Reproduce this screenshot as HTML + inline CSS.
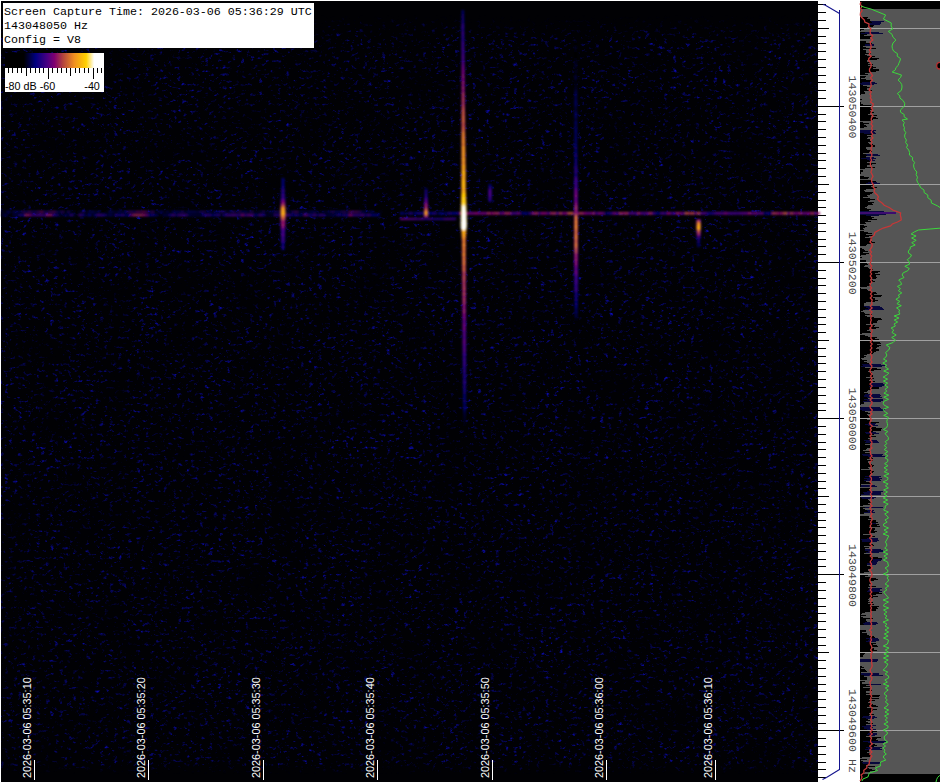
<!DOCTYPE html>
<html><head><meta charset="utf-8"><title>Spectrogram</title><style>
html,body{margin:0;padding:0;background:#fff;}
body{width:941px;height:783px;overflow:hidden;position:relative;}
svg{position:absolute;left:0;top:0;}
</style></head><body>
<svg width="941" height="783" viewBox="0 0 941 783">
<defs>
<filter id="nz" x="1" y="1" width="817" height="781" filterUnits="userSpaceOnUse" color-interpolation-filters="sRGB">
<feTurbulence type="fractalNoise" baseFrequency="0.22 0.30" numOctaves="3" seed="5" result="hi"/>
<feColorMatrix in="hi" type="matrix" values="0 0 0 0 0.05  0 0 0 0 0.05  0 0 0 0 0.8  3 0 0 0 -1.79" result="dots"/>
<feTurbulence type="fractalNoise" baseFrequency="0.03" numOctaves="2" seed="9" result="lo"/>
<feColorMatrix in="lo" type="matrix" values="0 0 0 0 0  0 0 0 0 0  0 0 0 0 0  1.6 0 0 0 -0.1" result="env"/>
<feComposite in="dots" in2="env" operator="in" result="m"/>
<feGaussianBlur in="m" stdDeviation="0.75"/>
</filter>
<linearGradient id="nzfade" x1="0" y1="0" x2="0" y2="1">
<stop offset="0" stop-color="#fff" stop-opacity="0"/>
<stop offset="0.018" stop-color="#fff" stop-opacity="0"/>
<stop offset="0.05" stop-color="#fff" stop-opacity="1"/>
<stop offset="0.975" stop-color="#fff" stop-opacity="1"/>
<stop offset="0.99" stop-color="#fff" stop-opacity="0"/>
</linearGradient>
<mask id="nzm" maskUnits="userSpaceOnUse" x="1" y="1" width="817" height="781"><rect x="1" y="1" width="817" height="781" fill="url(#nzfade)"/></mask>
<filter id="bl" x="-50%" y="-50%" width="200%" height="200%"><feGaussianBlur stdDeviation="0.9"/></filter>
<filter id="bl2" x="-5%" y="-500%" width="110%" height="1100%"><feGaussianBlur stdDeviation="0.8"/></filter>
<linearGradient id="cbar" x1="5" y1="0" x2="104" y2="0" gradientUnits="userSpaceOnUse">
<stop offset="0.000" stop-color="#000000"/><stop offset="0.190" stop-color="#000000"/><stop offset="0.310" stop-color="#000080"/><stop offset="0.430" stop-color="#4b0082"/><stop offset="0.500" stop-color="#800070"/><stop offset="0.580" stop-color="#b04040"/><stop offset="0.700" stop-color="#f09020"/><stop offset="0.820" stop-color="#ffd000"/><stop offset="0.900" stop-color="#ffffff"/><stop offset="1.000" stop-color="#ffffff"/></linearGradient>
</defs>
<rect x="1" y="1" width="817" height="781" fill="#010104"/><g mask="url(#nzm)"><rect x="1" y="1" width="817" height="781" fill="#fff" filter="url(#nz)"/></g><g filter="url(#bl2)"><rect x="1" y="211.0" width="3" height="1.4" fill="#00003b"/><rect x="4" y="211.0" width="3" height="1.4" fill="#000016"/><rect x="7" y="211.0" width="3" height="1.4" fill="#010080"/><rect x="10" y="211.0" width="3" height="1.4" fill="#00000b"/><rect x="13" y="211.0" width="3" height="1.4" fill="#00007a"/><rect x="16" y="211.0" width="3" height="1.4" fill="#00006c"/><rect x="19" y="211.0" width="3" height="1.4" fill="#00004e"/><rect x="22" y="211.0" width="3" height="1.4" fill="#340081"/><rect x="25" y="211.0" width="3" height="1.4" fill="#100080"/><rect x="28" y="211.0" width="3" height="1.4" fill="#4e0081"/><rect x="31" y="211.0" width="3" height="1.4" fill="#1f0081"/><rect x="34" y="211.0" width="3" height="1.4" fill="#1a0081"/><rect x="37" y="211.0" width="3" height="1.4" fill="#3e0082"/><rect x="40" y="211.0" width="3" height="1.4" fill="#7a0072"/><rect x="43" y="211.0" width="3" height="1.4" fill="#1d0081"/><rect x="46" y="211.0" width="3" height="1.4" fill="#250081"/><rect x="49" y="211.0" width="3" height="1.4" fill="#490082"/><rect x="52" y="211.0" width="3" height="1.4" fill="#5f007b"/><rect x="55" y="211.0" width="3" height="1.4" fill="#170081"/><rect x="58" y="211.0" width="3" height="1.4" fill="#000066"/><rect x="61" y="211.0" width="3" height="1.4" fill="#300081"/><rect x="64" y="211.0" width="3" height="1.4" fill="#000003"/><rect x="67" y="211.0" width="3" height="1.4" fill="#1b0081"/><rect x="70" y="211.0" width="3" height="1.4" fill="#000033"/><rect x="73" y="211.0" width="3" height="1.4" fill="#000014"/><rect x="76" y="211.0" width="3" height="1.4" fill="#00000e"/><rect x="79" y="211.0" width="3" height="1.4" fill="#000037"/><rect x="82" y="211.0" width="3" height="1.4" fill="#150081"/><rect x="85" y="211.0" width="3" height="1.4" fill="#00001c"/><rect x="88" y="211.0" width="3" height="1.4" fill="#000071"/><rect x="91" y="211.0" width="3" height="1.4" fill="#00007e"/><rect x="94" y="211.0" width="3" height="1.4" fill="#000045"/><rect x="97" y="211.0" width="3" height="1.4" fill="#00006a"/><rect x="100" y="211.0" width="3" height="1.4" fill="#000003"/><rect x="103" y="211.0" width="3" height="1.4" fill="#000002"/><rect x="106" y="211.0" width="3" height="1.4" fill="#000021"/><rect x="109" y="211.0" width="3" height="1.4" fill="#040080"/><rect x="112" y="211.0" width="3" height="1.4" fill="#000051"/><rect x="115" y="211.0" width="3" height="1.4" fill="#000039"/><rect x="118" y="211.0" width="3" height="1.4" fill="#000076"/><rect x="121" y="211.0" width="3" height="1.4" fill="#000061"/><rect x="124" y="211.0" width="3" height="1.4" fill="#000050"/><rect x="127" y="211.0" width="3" height="1.4" fill="#340081"/><rect x="130" y="211.0" width="3" height="1.4" fill="#410082"/><rect x="133" y="211.0" width="3" height="1.4" fill="#250081"/><rect x="136" y="211.0" width="3" height="1.4" fill="#680078"/><rect x="139" y="211.0" width="3" height="1.4" fill="#640079"/><rect x="142" y="211.0" width="3" height="1.4" fill="#85076b"/><rect x="145" y="211.0" width="3" height="1.4" fill="#500080"/><rect x="148" y="211.0" width="3" height="1.4" fill="#000079"/><rect x="151" y="211.0" width="3" height="1.4" fill="#3e0082"/><rect x="154" y="211.0" width="3" height="1.4" fill="#00001d"/><rect x="157" y="211.0" width="3" height="1.4" fill="#000054"/><rect x="160" y="211.0" width="3" height="1.4" fill="#0e0080"/><rect x="163" y="211.0" width="3" height="1.4" fill="#000016"/><rect x="166" y="211.0" width="3" height="1.4" fill="#00005e"/><rect x="169" y="211.0" width="3" height="1.4" fill="#000000"/><rect x="172" y="211.0" width="3" height="1.4" fill="#020080"/><rect x="175" y="211.0" width="3" height="1.4" fill="#0e0080"/><rect x="178" y="211.0" width="3" height="1.4" fill="#000070"/><rect x="181" y="211.0" width="3" height="1.4" fill="#1c0081"/><rect x="184" y="211.0" width="3" height="1.4" fill="#000038"/><rect x="187" y="211.0" width="3" height="1.4" fill="#060080"/><rect x="190" y="211.0" width="3" height="1.4" fill="#000074"/><rect x="193" y="211.0" width="3" height="1.4" fill="#000071"/><rect x="196" y="211.0" width="3" height="1.4" fill="#000057"/><rect x="199" y="211.0" width="3" height="1.4" fill="#180081"/><rect x="202" y="211.0" width="3" height="1.4" fill="#250081"/><rect x="205" y="211.0" width="3" height="1.4" fill="#00005a"/><rect x="208" y="211.0" width="3" height="1.4" fill="#020080"/><rect x="211" y="211.0" width="3" height="1.4" fill="#000002"/><rect x="214" y="211.0" width="3" height="1.4" fill="#070080"/><rect x="217" y="211.0" width="3" height="1.4" fill="#000080"/><rect x="220" y="211.0" width="3" height="1.4" fill="#2c0081"/><rect x="223" y="211.0" width="3" height="1.4" fill="#1a0081"/><rect x="226" y="211.0" width="3" height="1.4" fill="#000044"/><rect x="229" y="211.0" width="3" height="1.4" fill="#00006e"/><rect x="232" y="211.0" width="3" height="1.4" fill="#2a0081"/><rect x="235" y="211.0" width="3" height="1.4" fill="#00005e"/><rect x="238" y="211.0" width="3" height="1.4" fill="#310081"/><rect x="241" y="211.0" width="3" height="1.4" fill="#0e0080"/><rect x="244" y="211.0" width="3" height="1.4" fill="#00007b"/><rect x="247" y="211.0" width="3" height="1.4" fill="#000050"/><rect x="250" y="211.0" width="3" height="1.4" fill="#2a0081"/><rect x="253" y="211.0" width="3" height="1.4" fill="#000029"/><rect x="256" y="211.0" width="3" height="1.4" fill="#000034"/><rect x="259" y="211.0" width="3" height="1.4" fill="#00004c"/><rect x="262" y="211.0" width="3" height="1.4" fill="#1c0081"/><rect x="265" y="211.0" width="3" height="1.4" fill="#000007"/><rect x="268" y="211.0" width="3" height="1.4" fill="#000055"/><rect x="271" y="211.0" width="3" height="1.4" fill="#00006b"/><rect x="274" y="211.0" width="3" height="1.4" fill="#1d0081"/><rect x="277" y="211.0" width="3" height="1.4" fill="#150081"/><rect x="280" y="211.0" width="3" height="1.4" fill="#1b0081"/><rect x="283" y="211.0" width="3" height="1.4" fill="#000034"/><rect x="286" y="211.0" width="3" height="1.4" fill="#000057"/><rect x="289" y="211.0" width="3" height="1.4" fill="#000055"/><rect x="292" y="211.0" width="3" height="1.4" fill="#310081"/><rect x="295" y="211.0" width="3" height="1.4" fill="#440082"/><rect x="298" y="211.0" width="3" height="1.4" fill="#000053"/><rect x="301" y="211.0" width="3" height="1.4" fill="#00005a"/><rect x="304" y="211.0" width="3" height="1.4" fill="#00005d"/><rect x="307" y="211.0" width="3" height="1.4" fill="#00004e"/><rect x="310" y="211.0" width="3" height="1.4" fill="#000074"/><rect x="313" y="211.0" width="3" height="1.4" fill="#00007f"/><rect x="316" y="211.0" width="3" height="1.4" fill="#000032"/><rect x="319" y="211.0" width="3" height="1.4" fill="#000000"/><rect x="322" y="211.0" width="3" height="1.4" fill="#00004f"/><rect x="325" y="211.0" width="3" height="1.4" fill="#000044"/><rect x="328" y="211.0" width="3" height="1.4" fill="#00006f"/><rect x="331" y="211.0" width="3" height="1.4" fill="#280081"/><rect x="334" y="211.0" width="3" height="1.4" fill="#0b0080"/><rect x="337" y="211.0" width="3" height="1.4" fill="#00007b"/><rect x="340" y="211.0" width="3" height="1.4" fill="#180081"/><rect x="343" y="211.0" width="3" height="1.4" fill="#310081"/><rect x="346" y="211.0" width="3" height="1.4" fill="#00006e"/><rect x="349" y="211.0" width="3" height="1.4" fill="#700075"/><rect x="352" y="211.0" width="3" height="1.4" fill="#5b007d"/><rect x="355" y="211.0" width="3" height="1.4" fill="#59007d"/><rect x="358" y="211.0" width="3" height="1.4" fill="#3a0082"/><rect x="361" y="211.0" width="3" height="1.4" fill="#00006f"/><rect x="364" y="211.0" width="3" height="1.4" fill="#00005c"/><rect x="367" y="211.0" width="3" height="1.4" fill="#000013"/><rect x="370" y="211.0" width="3" height="1.4" fill="#00007f"/><rect x="373" y="211.0" width="3" height="1.4" fill="#000003"/><rect x="376" y="211.0" width="3" height="1.4" fill="#000004"/><rect x="379" y="211.0" width="3" height="1.4" fill="#000022"/><rect x="1" y="214.0" width="3" height="2.2" fill="#00002d"/><rect x="4" y="214.0" width="3" height="2.2" fill="#000054"/><rect x="7" y="214.0" width="3" height="2.2" fill="#000018"/><rect x="10" y="214.0" width="3" height="2.2" fill="#000011"/><rect x="13" y="214.0" width="3" height="2.2" fill="#00003d"/><rect x="16" y="214.0" width="3" height="2.2" fill="#000049"/><rect x="19" y="214.0" width="3" height="2.2" fill="#150081"/><rect x="22" y="214.0" width="3" height="2.2" fill="#050080"/><rect x="25" y="214.0" width="3" height="2.2" fill="#8e1362"/><rect x="28" y="214.0" width="3" height="2.2" fill="#790072"/><rect x="31" y="214.0" width="3" height="2.2" fill="#360081"/><rect x="34" y="214.0" width="3" height="2.2" fill="#3b0082"/><rect x="37" y="214.0" width="3" height="2.2" fill="#410082"/><rect x="40" y="214.0" width="3" height="2.2" fill="#450082"/><rect x="43" y="214.0" width="3" height="2.2" fill="#290081"/><rect x="46" y="214.0" width="3" height="2.2" fill="#890c67"/><rect x="49" y="214.0" width="3" height="2.2" fill="#8c1064"/><rect x="52" y="214.0" width="3" height="2.2" fill="#2b0081"/><rect x="55" y="214.0" width="3" height="2.2" fill="#180081"/><rect x="58" y="214.0" width="3" height="2.2" fill="#000039"/><rect x="61" y="214.0" width="3" height="2.2" fill="#00002c"/><rect x="64" y="214.0" width="3" height="2.2" fill="#000058"/><rect x="67" y="214.0" width="3" height="2.2" fill="#000044"/><rect x="70" y="214.0" width="3" height="2.2" fill="#230081"/><rect x="73" y="214.0" width="3" height="2.2" fill="#00002d"/><rect x="76" y="214.0" width="3" height="2.2" fill="#000010"/><rect x="79" y="214.0" width="3" height="2.2" fill="#320081"/><rect x="82" y="214.0" width="3" height="2.2" fill="#00007b"/><rect x="85" y="214.0" width="3" height="2.2" fill="#00002a"/><rect x="88" y="214.0" width="3" height="2.2" fill="#00007f"/><rect x="91" y="214.0" width="3" height="2.2" fill="#000010"/><rect x="94" y="214.0" width="3" height="2.2" fill="#00007b"/><rect x="97" y="214.0" width="3" height="2.2" fill="#360081"/><rect x="100" y="214.0" width="3" height="2.2" fill="#270081"/><rect x="103" y="214.0" width="3" height="2.2" fill="#120080"/><rect x="106" y="214.0" width="3" height="2.2" fill="#000042"/><rect x="109" y="214.0" width="3" height="2.2" fill="#000059"/><rect x="112" y="214.0" width="3" height="2.2" fill="#00002f"/><rect x="115" y="214.0" width="3" height="2.2" fill="#1c0081"/><rect x="118" y="214.0" width="3" height="2.2" fill="#000080"/><rect x="121" y="214.0" width="3" height="2.2" fill="#230081"/><rect x="124" y="214.0" width="3" height="2.2" fill="#00006c"/><rect x="127" y="214.0" width="3" height="2.2" fill="#000074"/><rect x="130" y="214.0" width="3" height="2.2" fill="#60007b"/><rect x="133" y="214.0" width="3" height="2.2" fill="#961e5a"/><rect x="136" y="214.0" width="3" height="2.2" fill="#9a2356"/><rect x="139" y="214.0" width="3" height="2.2" fill="#982058"/><rect x="142" y="214.0" width="3" height="2.2" fill="#8a0e66"/><rect x="145" y="214.0" width="3" height="2.2" fill="#60007b"/><rect x="148" y="214.0" width="3" height="2.2" fill="#010080"/><rect x="151" y="214.0" width="3" height="2.2" fill="#110080"/><rect x="154" y="214.0" width="3" height="2.2" fill="#000065"/><rect x="157" y="214.0" width="3" height="2.2" fill="#000016"/><rect x="160" y="214.0" width="3" height="2.2" fill="#000012"/><rect x="163" y="214.0" width="3" height="2.2" fill="#000047"/><rect x="166" y="214.0" width="3" height="2.2" fill="#000042"/><rect x="169" y="214.0" width="3" height="2.2" fill="#120080"/><rect x="172" y="214.0" width="3" height="2.2" fill="#330081"/><rect x="175" y="214.0" width="3" height="2.2" fill="#00006a"/><rect x="178" y="214.0" width="3" height="2.2" fill="#300081"/><rect x="181" y="214.0" width="3" height="2.2" fill="#370081"/><rect x="184" y="214.0" width="3" height="2.2" fill="#330081"/><rect x="187" y="214.0" width="3" height="2.2" fill="#000058"/><rect x="190" y="214.0" width="3" height="2.2" fill="#00003a"/><rect x="193" y="214.0" width="3" height="2.2" fill="#00003b"/><rect x="196" y="214.0" width="3" height="2.2" fill="#000035"/><rect x="199" y="214.0" width="3" height="2.2" fill="#000036"/><rect x="202" y="214.0" width="3" height="2.2" fill="#090080"/><rect x="205" y="214.0" width="3" height="2.2" fill="#2c0081"/><rect x="208" y="214.0" width="3" height="2.2" fill="#240081"/><rect x="211" y="214.0" width="3" height="2.2" fill="#000071"/><rect x="214" y="214.0" width="3" height="2.2" fill="#0d0080"/><rect x="217" y="214.0" width="3" height="2.2" fill="#200081"/><rect x="220" y="214.0" width="3" height="2.2" fill="#00001f"/><rect x="223" y="214.0" width="3" height="2.2" fill="#120080"/><rect x="226" y="214.0" width="3" height="2.2" fill="#380081"/><rect x="229" y="214.0" width="3" height="2.2" fill="#330081"/><rect x="232" y="214.0" width="3" height="2.2" fill="#410082"/><rect x="235" y="214.0" width="3" height="2.2" fill="#310081"/><rect x="238" y="214.0" width="3" height="2.2" fill="#1a0081"/><rect x="241" y="214.0" width="3" height="2.2" fill="#6e0076"/><rect x="244" y="214.0" width="3" height="2.2" fill="#250081"/><rect x="247" y="214.0" width="3" height="2.2" fill="#4e0081"/><rect x="250" y="214.0" width="3" height="2.2" fill="#510080"/><rect x="253" y="214.0" width="3" height="2.2" fill="#000077"/><rect x="256" y="214.0" width="3" height="2.2" fill="#00006a"/><rect x="259" y="214.0" width="3" height="2.2" fill="#340081"/><rect x="262" y="214.0" width="3" height="2.2" fill="#160081"/><rect x="265" y="214.0" width="3" height="2.2" fill="#00002f"/><rect x="268" y="214.0" width="3" height="2.2" fill="#000026"/><rect x="271" y="214.0" width="3" height="2.2" fill="#00002b"/><rect x="274" y="214.0" width="3" height="2.2" fill="#2c0081"/><rect x="277" y="214.0" width="3" height="2.2" fill="#200081"/><rect x="280" y="214.0" width="3" height="2.2" fill="#00002b"/><rect x="283" y="214.0" width="3" height="2.2" fill="#250081"/><rect x="286" y="214.0" width="3" height="2.2" fill="#3b0082"/><rect x="289" y="214.0" width="3" height="2.2" fill="#190081"/><rect x="292" y="214.0" width="3" height="2.2" fill="#000077"/><rect x="295" y="214.0" width="3" height="2.2" fill="#1d0081"/><rect x="298" y="214.0" width="3" height="2.2" fill="#000064"/><rect x="301" y="214.0" width="3" height="2.2" fill="#00004d"/><rect x="304" y="214.0" width="3" height="2.2" fill="#57007e"/><rect x="307" y="214.0" width="3" height="2.2" fill="#230081"/><rect x="310" y="214.0" width="3" height="2.2" fill="#0b0080"/><rect x="313" y="214.0" width="3" height="2.2" fill="#370081"/><rect x="316" y="214.0" width="3" height="2.2" fill="#00006c"/><rect x="319" y="214.0" width="3" height="2.2" fill="#290081"/><rect x="322" y="214.0" width="3" height="2.2" fill="#230081"/><rect x="325" y="214.0" width="3" height="2.2" fill="#000038"/><rect x="328" y="214.0" width="3" height="2.2" fill="#000041"/><rect x="331" y="214.0" width="3" height="2.2" fill="#00004d"/><rect x="334" y="214.0" width="3" height="2.2" fill="#000048"/><rect x="337" y="214.0" width="3" height="2.2" fill="#120080"/><rect x="340" y="214.0" width="3" height="2.2" fill="#000071"/><rect x="343" y="214.0" width="3" height="2.2" fill="#1e0081"/><rect x="346" y="214.0" width="3" height="2.2" fill="#0c0080"/><rect x="349" y="214.0" width="3" height="2.2" fill="#800170"/><rect x="352" y="214.0" width="3" height="2.2" fill="#300081"/><rect x="355" y="214.0" width="3" height="2.2" fill="#2f0081"/><rect x="358" y="214.0" width="3" height="2.2" fill="#2c0081"/><rect x="361" y="214.0" width="3" height="2.2" fill="#430082"/><rect x="364" y="214.0" width="3" height="2.2" fill="#000076"/><rect x="367" y="214.0" width="3" height="2.2" fill="#320081"/><rect x="370" y="214.0" width="3" height="2.2" fill="#000078"/><rect x="373" y="214.0" width="3" height="2.2" fill="#00007d"/><rect x="376" y="214.0" width="3" height="2.2" fill="#00007a"/><rect x="379" y="214.0" width="3" height="2.2" fill="#00000f"/><rect x="400" y="212.0" width="3" height="2.6" fill="#000076"/><rect x="403" y="212.0" width="3" height="2.6" fill="#00004a"/><rect x="406" y="212.0" width="3" height="2.6" fill="#00002b"/><rect x="409" y="212.0" width="3" height="2.6" fill="#1e0081"/><rect x="412" y="212.0" width="3" height="2.6" fill="#000048"/><rect x="415" y="212.0" width="3" height="2.6" fill="#00007b"/><rect x="418" y="212.0" width="3" height="2.6" fill="#170081"/><rect x="421" y="212.0" width="3" height="2.6" fill="#060080"/><rect x="424" y="212.0" width="3" height="2.6" fill="#000062"/><rect x="427" y="212.0" width="3" height="2.6" fill="#020080"/><rect x="430" y="212.0" width="3" height="2.6" fill="#060080"/><rect x="433" y="212.0" width="3" height="2.6" fill="#1c0081"/><rect x="436" y="212.0" width="3" height="2.6" fill="#00003d"/><rect x="439" y="212.0" width="3" height="2.6" fill="#060080"/><rect x="442" y="212.0" width="3" height="2.6" fill="#000055"/><rect x="445" y="212.0" width="3" height="2.6" fill="#00005a"/><rect x="448" y="212.0" width="3" height="2.6" fill="#1b0081"/><rect x="451" y="212.0" width="3" height="2.6" fill="#010080"/><rect x="454" y="212.0" width="3" height="2.6" fill="#060080"/><rect x="457" y="212.0" width="3" height="2.6" fill="#1a0081"/><rect x="460" y="212.0" width="3" height="2.6" fill="#961d5a"/><rect x="463" y="212.0" width="3" height="2.6" fill="#62007a"/><rect x="466" y="212.0" width="3" height="2.6" fill="#770073"/><rect x="469" y="212.0" width="3" height="2.6" fill="#6a0077"/><rect x="472" y="212.0" width="3" height="2.6" fill="#6b0077"/><rect x="475" y="212.0" width="3" height="2.6" fill="#81016f"/><rect x="478" y="212.0" width="3" height="2.6" fill="#64007a"/><rect x="481" y="212.0" width="3" height="2.6" fill="#6d0076"/><rect x="484" y="212.0" width="3" height="2.6" fill="#670079"/><rect x="487" y="212.0" width="3" height="2.6" fill="#982158"/><rect x="490" y="212.0" width="3" height="2.6" fill="#81016f"/><rect x="493" y="212.0" width="3" height="2.6" fill="#92185e"/><rect x="496" y="212.0" width="3" height="2.6" fill="#982158"/><rect x="499" y="212.0" width="3" height="2.6" fill="#4c0082"/><rect x="502" y="212.0" width="3" height="2.6" fill="#700075"/><rect x="505" y="212.0" width="3" height="2.6" fill="#992157"/><rect x="508" y="212.0" width="3" height="2.6" fill="#8f1461"/><rect x="511" y="212.0" width="3" height="2.6" fill="#400082"/><rect x="514" y="212.0" width="3" height="2.6" fill="#3e0082"/><rect x="517" y="212.0" width="3" height="2.6" fill="#62007a"/><rect x="520" y="212.0" width="3" height="2.6" fill="#000062"/><rect x="523" y="212.0" width="3" height="2.6" fill="#00007e"/><rect x="526" y="212.0" width="3" height="2.6" fill="#000062"/><rect x="529" y="212.0" width="3" height="2.6" fill="#2a0081"/><rect x="532" y="212.0" width="3" height="2.6" fill="#890c67"/><rect x="535" y="212.0" width="3" height="2.6" fill="#941b5c"/><rect x="538" y="212.0" width="3" height="2.6" fill="#410082"/><rect x="541" y="212.0" width="3" height="2.6" fill="#83046d"/><rect x="544" y="212.0" width="3" height="2.6" fill="#7d0071"/><rect x="547" y="212.0" width="3" height="2.6" fill="#400082"/><rect x="550" y="212.0" width="3" height="2.6" fill="#931a5d"/><rect x="553" y="212.0" width="3" height="2.6" fill="#9c2554"/><rect x="556" y="212.0" width="3" height="2.6" fill="#4b0082"/><rect x="559" y="212.0" width="3" height="2.6" fill="#a02b50"/><rect x="562" y="212.0" width="3" height="2.6" fill="#6c0077"/><rect x="565" y="212.0" width="3" height="2.6" fill="#81026f"/><rect x="568" y="212.0" width="3" height="2.6" fill="#ba4d3b"/><rect x="571" y="212.0" width="3" height="2.6" fill="#b6473d"/><rect x="574" y="212.0" width="3" height="2.6" fill="#7b0072"/><rect x="577" y="212.0" width="3" height="2.6" fill="#971f59"/><rect x="580" y="212.0" width="3" height="2.6" fill="#9a2356"/><rect x="583" y="212.0" width="3" height="2.6" fill="#81016f"/><rect x="586" y="212.0" width="3" height="2.6" fill="#63007a"/><rect x="589" y="212.0" width="3" height="2.6" fill="#660079"/><rect x="592" y="212.0" width="3" height="2.6" fill="#8b0f65"/><rect x="595" y="212.0" width="3" height="2.6" fill="#380081"/><rect x="598" y="212.0" width="3" height="2.6" fill="#720075"/><rect x="601" y="212.0" width="3" height="2.6" fill="#63007a"/><rect x="604" y="212.0" width="3" height="2.6" fill="#000059"/><rect x="607" y="212.0" width="3" height="2.6" fill="#080080"/><rect x="610" y="212.0" width="3" height="2.6" fill="#250081"/><rect x="613" y="212.0" width="3" height="2.6" fill="#6b0077"/><rect x="616" y="212.0" width="3" height="2.6" fill="#380082"/><rect x="619" y="212.0" width="3" height="2.6" fill="#9d2653"/><rect x="622" y="212.0" width="3" height="2.6" fill="#8a0d66"/><rect x="625" y="212.0" width="3" height="2.6" fill="#9b2455"/><rect x="628" y="212.0" width="3" height="2.6" fill="#3c0082"/><rect x="631" y="212.0" width="3" height="2.6" fill="#4d0081"/><rect x="634" y="212.0" width="3" height="2.6" fill="#360081"/><rect x="637" y="212.0" width="3" height="2.6" fill="#890c67"/><rect x="640" y="212.0" width="3" height="2.6" fill="#4d0081"/><rect x="643" y="212.0" width="3" height="2.6" fill="#3f0082"/><rect x="646" y="212.0" width="3" height="2.6" fill="#60007b"/><rect x="649" y="212.0" width="3" height="2.6" fill="#951d5b"/><rect x="652" y="212.0" width="3" height="2.6" fill="#390082"/><rect x="655" y="212.0" width="3" height="2.6" fill="#010080"/><rect x="658" y="212.0" width="3" height="2.6" fill="#00006f"/><rect x="661" y="212.0" width="3" height="2.6" fill="#430082"/><rect x="664" y="212.0" width="3" height="2.6" fill="#200081"/><rect x="667" y="212.0" width="3" height="2.6" fill="#82036e"/><rect x="670" y="212.0" width="3" height="2.6" fill="#3d0082"/><rect x="673" y="212.0" width="3" height="2.6" fill="#3d0082"/><rect x="676" y="212.0" width="3" height="2.6" fill="#890c67"/><rect x="679" y="212.0" width="3" height="2.6" fill="#740074"/><rect x="682" y="212.0" width="3" height="2.6" fill="#53007f"/><rect x="685" y="212.0" width="3" height="2.6" fill="#b6473d"/><rect x="688" y="212.0" width="3" height="2.6" fill="#9e2852"/><rect x="691" y="212.0" width="3" height="2.6" fill="#af3e41"/><rect x="694" y="212.0" width="3" height="2.6" fill="#60007b"/><rect x="697" y="212.0" width="3" height="2.6" fill="#aa3846"/><rect x="700" y="212.0" width="3" height="2.6" fill="#4b0082"/><rect x="703" y="212.0" width="3" height="2.6" fill="#490082"/><rect x="706" y="212.0" width="3" height="2.6" fill="#1b0081"/><rect x="709" y="212.0" width="3" height="2.6" fill="#0c0080"/><rect x="712" y="212.0" width="3" height="2.6" fill="#200081"/><rect x="715" y="212.0" width="3" height="2.6" fill="#440082"/><rect x="718" y="212.0" width="3" height="2.6" fill="#4d0081"/><rect x="721" y="212.0" width="3" height="2.6" fill="#3f0082"/><rect x="724" y="212.0" width="3" height="2.6" fill="#6d0077"/><rect x="727" y="212.0" width="3" height="2.6" fill="#4a0082"/><rect x="730" y="212.0" width="3" height="2.6" fill="#3d0082"/><rect x="733" y="212.0" width="3" height="2.6" fill="#420082"/><rect x="736" y="212.0" width="3" height="2.6" fill="#370081"/><rect x="739" y="212.0" width="3" height="2.6" fill="#460082"/><rect x="742" y="212.0" width="3" height="2.6" fill="#53007f"/><rect x="745" y="212.0" width="3" height="2.6" fill="#520080"/><rect x="748" y="212.0" width="3" height="2.6" fill="#870969"/><rect x="751" y="212.0" width="3" height="2.6" fill="#500080"/><rect x="754" y="212.0" width="3" height="2.6" fill="#6a0078"/><rect x="757" y="212.0" width="3" height="2.6" fill="#450082"/><rect x="760" y="212.0" width="3" height="2.6" fill="#5a007d"/><rect x="763" y="212.0" width="3" height="2.6" fill="#000062"/><rect x="766" y="212.0" width="3" height="2.6" fill="#0b0080"/><rect x="769" y="212.0" width="3" height="2.6" fill="#000078"/><rect x="772" y="212.0" width="3" height="2.6" fill="#9f2a51"/><rect x="775" y="212.0" width="3" height="2.6" fill="#961e5a"/><rect x="778" y="212.0" width="3" height="2.6" fill="#770073"/><rect x="781" y="212.0" width="3" height="2.6" fill="#951c5b"/><rect x="784" y="212.0" width="3" height="2.6" fill="#bc4f3a"/><rect x="787" y="212.0" width="3" height="2.6" fill="#5f007b"/><rect x="790" y="212.0" width="3" height="2.6" fill="#a22d4e"/><rect x="793" y="212.0" width="3" height="2.6" fill="#710075"/><rect x="796" y="212.0" width="3" height="2.6" fill="#720075"/><rect x="799" y="212.0" width="3" height="2.6" fill="#92175e"/><rect x="802" y="212.0" width="3" height="2.6" fill="#5e007b"/><rect x="805" y="212.0" width="3" height="2.6" fill="#6b0077"/><rect x="808" y="212.0" width="3" height="2.6" fill="#800070"/><rect x="811" y="212.0" width="3" height="2.6" fill="#9c2654"/><rect x="814" y="212.0" width="3" height="2.6" fill="#56007e"/><rect x="817" y="212.0" width="3" height="2.6" fill="#8e1362"/><rect x="400" y="218.0" width="4" height="2.0" fill="#5f007b"/><rect x="404" y="218.0" width="4" height="2.0" fill="#5b007d"/><rect x="408" y="218.0" width="4" height="2.0" fill="#4d0081"/><rect x="412" y="218.0" width="4" height="2.0" fill="#4a0082"/><rect x="416" y="218.0" width="4" height="2.0" fill="#3b0082"/><rect x="420" y="218.0" width="4" height="2.0" fill="#3f0082"/><rect x="424" y="218.0" width="4" height="2.0" fill="#160081"/><rect x="428" y="218.0" width="4" height="2.0" fill="#380081"/><rect x="432" y="218.0" width="4" height="2.0" fill="#200081"/><rect x="436" y="218.0" width="4" height="2.0" fill="#1b0081"/><rect x="440" y="218.0" width="4" height="2.0" fill="#170081"/><rect x="444" y="218.0" width="4" height="2.0" fill="#3d0082"/><rect x="448" y="218.0" width="4" height="2.0" fill="#3e0082"/><rect x="452" y="218.0" width="4" height="2.0" fill="#340081"/></g><g filter="url(#bl)"><rect x="461.4" y="10" width="2.8" height="2" fill="#000032"/><rect x="461.4" y="12" width="2.8" height="2" fill="#000036"/><rect x="461.4" y="14" width="2.8" height="2" fill="#000040"/><rect x="461.4" y="16" width="2.8" height="2" fill="#000051"/><rect x="461.4" y="18" width="2.9" height="2" fill="#000044"/><rect x="461.4" y="20" width="2.9" height="2" fill="#00005d"/><rect x="461.4" y="22" width="2.9" height="2" fill="#000057"/><rect x="461.4" y="24" width="2.9" height="2" fill="#060080"/><rect x="461.4" y="26" width="2.9" height="2" fill="#0a0080"/><rect x="461.4" y="28" width="2.9" height="2" fill="#00007d"/><rect x="461.4" y="30" width="2.9" height="2" fill="#000070"/><rect x="461.4" y="32" width="2.9" height="2" fill="#140081"/><rect x="461.4" y="34" width="3.0" height="2" fill="#00007e"/><rect x="461.4" y="36" width="3.0" height="2" fill="#030080"/><rect x="461.4" y="38" width="3.0" height="2" fill="#000074"/><rect x="461.4" y="40" width="3.0" height="2" fill="#0a0080"/><rect x="461.4" y="42" width="3.0" height="2" fill="#110080"/><rect x="461.4" y="44" width="3.0" height="2" fill="#150081"/><rect x="461.4" y="46" width="3.0" height="2" fill="#0c0080"/><rect x="461.4" y="48" width="3.1" height="2" fill="#1a0081"/><rect x="461.4" y="50" width="3.1" height="2" fill="#0b0080"/><rect x="461.5" y="52" width="3.1" height="2" fill="#170081"/><rect x="461.5" y="54" width="3.1" height="2" fill="#140081"/><rect x="461.5" y="56" width="3.1" height="2" fill="#220081"/><rect x="461.5" y="58" width="3.1" height="2" fill="#180081"/><rect x="461.5" y="60" width="3.1" height="2" fill="#1a0081"/><rect x="461.5" y="62" width="3.1" height="2" fill="#270081"/><rect x="461.5" y="64" width="3.2" height="2" fill="#270081"/><rect x="461.5" y="66" width="3.2" height="2" fill="#380081"/><rect x="461.5" y="68" width="3.2" height="2" fill="#380082"/><rect x="461.5" y="70" width="3.2" height="2" fill="#430082"/><rect x="461.5" y="72" width="3.2" height="2" fill="#430082"/><rect x="461.5" y="74" width="3.2" height="2" fill="#480082"/><rect x="461.5" y="76" width="3.2" height="2" fill="#520080"/><rect x="461.5" y="78" width="3.3" height="2" fill="#410082"/><rect x="461.5" y="80" width="3.3" height="2" fill="#420082"/><rect x="461.5" y="82" width="3.3" height="2" fill="#61007a"/><rect x="461.5" y="84" width="3.3" height="2" fill="#410082"/><rect x="461.5" y="86" width="3.3" height="2" fill="#5c007c"/><rect x="461.5" y="88" width="3.3" height="2" fill="#5c007c"/><rect x="461.5" y="90" width="3.3" height="2" fill="#450082"/><rect x="461.5" y="92" width="3.3" height="2" fill="#6c0077"/><rect x="461.5" y="94" width="3.4" height="2" fill="#720075"/><rect x="461.5" y="96" width="3.4" height="2" fill="#6a0077"/><rect x="461.5" y="98" width="3.4" height="2" fill="#740074"/><rect x="461.5" y="100" width="3.4" height="2" fill="#7d0071"/><rect x="461.5" y="102" width="3.4" height="2" fill="#64007a"/><rect x="461.5" y="104" width="3.5" height="2" fill="#7b0072"/><rect x="461.5" y="106" width="3.5" height="2" fill="#7f0070"/><rect x="461.5" y="108" width="3.5" height="2" fill="#8f1461"/><rect x="461.5" y="110" width="3.5" height="2" fill="#92195e"/><rect x="461.5" y="112" width="3.6" height="2" fill="#971f59"/><rect x="461.5" y="114" width="3.6" height="2" fill="#93195d"/><rect x="461.5" y="116" width="3.6" height="2" fill="#a22d4e"/><rect x="461.5" y="118" width="3.6" height="2" fill="#9d2753"/><rect x="461.5" y="120" width="3.7" height="2" fill="#a12c4f"/><rect x="461.5" y="122" width="3.7" height="2" fill="#93195d"/><rect x="461.5" y="124" width="3.7" height="2" fill="#8f1461"/><rect x="461.5" y="126" width="3.7" height="2" fill="#961d5a"/><rect x="461.5" y="128" width="3.8" height="2" fill="#a12c4f"/><rect x="461.4" y="130" width="3.8" height="2" fill="#9b2455"/><rect x="461.4" y="132" width="3.8" height="2" fill="#b7493c"/><rect x="461.4" y="134" width="3.9" height="2" fill="#b1423f"/><rect x="461.4" y="136" width="3.9" height="2" fill="#b6483d"/><rect x="461.4" y="138" width="3.9" height="2" fill="#b94b3c"/><rect x="461.4" y="140" width="3.9" height="2" fill="#bd5139"/><rect x="461.4" y="142" width="4.0" height="2" fill="#ba4d3b"/><rect x="461.4" y="144" width="4.0" height="2" fill="#ad3c43"/><rect x="461.4" y="146" width="4.0" height="2" fill="#c96033"/><rect x="461.4" y="148" width="4.0" height="2" fill="#cb6133"/><rect x="461.4" y="150" width="4.1" height="2" fill="#c55b35"/><rect x="461.4" y="152" width="4.1" height="2" fill="#c85e34"/><rect x="461.4" y="154" width="4.1" height="2" fill="#ce6531"/><rect x="461.4" y="156" width="4.1" height="2" fill="#bc503a"/><rect x="461.4" y="158" width="4.2" height="2" fill="#d46d2e"/><rect x="461.4" y="160" width="4.2" height="2" fill="#c65b35"/><rect x="461.4" y="162" width="4.2" height="2" fill="#c25637"/><rect x="461.4" y="164" width="4.3" height="2" fill="#ca6033"/><rect x="461.4" y="166" width="4.3" height="2" fill="#da752b"/><rect x="461.4" y="168" width="4.3" height="2" fill="#cb6232"/><rect x="461.4" y="170" width="4.3" height="2" fill="#de7929"/><rect x="461.4" y="172" width="4.4" height="2" fill="#e78524"/><rect x="461.4" y="174" width="4.4" height="2" fill="#d9742b"/><rect x="461.4" y="176" width="4.4" height="2" fill="#d7712c"/><rect x="461.3" y="178" width="4.4" height="2" fill="#dc772a"/><rect x="461.3" y="180" width="4.5" height="2" fill="#e48226"/><rect x="461.3" y="182" width="4.5" height="2" fill="#e98724"/><rect x="461.3" y="184" width="4.5" height="2" fill="#e68325"/><rect x="461.3" y="186" width="4.5" height="2" fill="#e88624"/><rect x="461.3" y="188" width="4.6" height="2" fill="#d8722c"/><rect x="461.3" y="190" width="4.6" height="2" fill="#e07d28"/><rect x="461.3" y="192" width="4.7" height="2" fill="#ea8923"/><rect x="461.2" y="194" width="4.9" height="2" fill="#f4a018"/><rect x="461.1" y="196" width="5.0" height="2" fill="#f2991c"/><rect x="461.1" y="198" width="5.1" height="2" fill="#f6a814"/><rect x="461.0" y="200" width="5.3" height="2" fill="#f39d19"/><rect x="461.0" y="202" width="5.4" height="2" fill="#f5a615"/><rect x="460.9" y="204" width="5.5" height="2" fill="#f9b40e"/><rect x="460.9" y="206" width="5.6" height="2" fill="#fdc904"/><rect x="460.8" y="208" width="5.7" height="2" fill="#ffd105"/><rect x="460.8" y="210" width="5.8" height="2" fill="#ffd92f"/><rect x="460.8" y="212" width="5.9" height="2" fill="#ffd413"/><rect x="460.8" y="214" width="6.0" height="2" fill="#ffe46c"/><rect x="460.7" y="216" width="6.0" height="2" fill="#ffe679"/><rect x="460.7" y="218" width="6.1" height="2" fill="#ffe679"/><rect x="460.7" y="220" width="6.2" height="2" fill="#ffda37"/><rect x="460.6" y="222" width="6.3" height="2" fill="#fff5cb"/><rect x="460.6" y="224" width="6.4" height="2" fill="#ffdd46"/><rect x="460.7" y="226" width="6.1" height="2" fill="#fff8db"/><rect x="461.0" y="228" width="5.5" height="2" fill="#ffdb3c"/><rect x="461.3" y="230" width="5.1" height="2" fill="#ea8823"/><rect x="461.4" y="232" width="4.9" height="2" fill="#d7712c"/><rect x="461.5" y="234" width="4.7" height="2" fill="#d46d2e"/><rect x="461.6" y="236" width="4.4" height="2" fill="#ca6033"/><rect x="461.7" y="238" width="4.2" height="2" fill="#b7493c"/><rect x="461.9" y="240" width="4.0" height="2" fill="#b04040"/><rect x="461.9" y="242" width="4.0" height="2" fill="#ac3a44"/><rect x="461.9" y="244" width="4.0" height="2" fill="#c25737"/><rect x="461.9" y="246" width="4.0" height="2" fill="#a83548"/><rect x="461.9" y="248" width="4.0" height="2" fill="#b3443e"/><rect x="461.9" y="250" width="4.0" height="2" fill="#a22d4e"/><rect x="461.9" y="252" width="3.9" height="2" fill="#ae3d42"/><rect x="461.9" y="254" width="3.9" height="2" fill="#ba4c3b"/><rect x="462.0" y="256" width="3.9" height="2" fill="#9b2455"/><rect x="462.0" y="258" width="3.9" height="2" fill="#b04040"/><rect x="462.0" y="260" width="3.9" height="2" fill="#a12c4f"/><rect x="462.0" y="262" width="3.9" height="2" fill="#ab3a45"/><rect x="462.0" y="264" width="3.9" height="2" fill="#a12c4f"/><rect x="462.0" y="266" width="3.9" height="2" fill="#8d1163"/><rect x="462.0" y="268" width="3.9" height="2" fill="#a12c4f"/><rect x="462.1" y="270" width="3.9" height="2" fill="#8f1361"/><rect x="462.1" y="272" width="3.9" height="2" fill="#790072"/><rect x="462.1" y="274" width="3.9" height="2" fill="#730074"/><rect x="462.1" y="276" width="3.8" height="2" fill="#84066c"/><rect x="462.1" y="278" width="3.8" height="2" fill="#800070"/><rect x="462.1" y="280" width="3.8" height="2" fill="#760074"/><rect x="462.1" y="282" width="3.8" height="2" fill="#6b0077"/><rect x="462.1" y="284" width="3.8" height="2" fill="#700075"/><rect x="462.2" y="286" width="3.8" height="2" fill="#6b0077"/><rect x="462.2" y="288" width="3.8" height="2" fill="#800070"/><rect x="462.2" y="290" width="3.8" height="2" fill="#56007e"/><rect x="462.2" y="292" width="3.8" height="2" fill="#740074"/><rect x="462.2" y="294" width="3.8" height="2" fill="#750074"/><rect x="462.2" y="296" width="3.8" height="2" fill="#500080"/><rect x="462.2" y="298" width="3.8" height="2" fill="#710075"/><rect x="462.3" y="300" width="3.7" height="2" fill="#640079"/><rect x="462.3" y="302" width="3.7" height="2" fill="#690078"/><rect x="462.3" y="304" width="3.7" height="2" fill="#4a0082"/><rect x="462.3" y="306" width="3.7" height="2" fill="#4a0082"/><rect x="462.3" y="308" width="3.7" height="2" fill="#480082"/><rect x="462.3" y="310" width="3.7" height="2" fill="#5f007b"/><rect x="462.3" y="312" width="3.7" height="2" fill="#490082"/><rect x="462.3" y="314" width="3.7" height="2" fill="#3e0082"/><rect x="462.4" y="316" width="3.7" height="2" fill="#3d0082"/><rect x="462.4" y="318" width="3.7" height="2" fill="#350081"/><rect x="462.4" y="320" width="3.7" height="2" fill="#290081"/><rect x="462.4" y="322" width="3.6" height="2" fill="#280081"/><rect x="462.4" y="324" width="3.6" height="2" fill="#410082"/><rect x="462.4" y="326" width="3.6" height="2" fill="#2a0081"/><rect x="462.4" y="328" width="3.6" height="2" fill="#3f0082"/><rect x="462.5" y="330" width="3.6" height="2" fill="#230081"/><rect x="462.5" y="332" width="3.6" height="2" fill="#200081"/><rect x="462.5" y="334" width="3.6" height="2" fill="#270081"/><rect x="462.5" y="336" width="3.6" height="2" fill="#180081"/><rect x="462.5" y="338" width="3.6" height="2" fill="#1c0081"/><rect x="462.5" y="340" width="3.6" height="2" fill="#2f0081"/><rect x="462.5" y="342" width="3.6" height="2" fill="#290081"/><rect x="462.5" y="344" width="3.6" height="2" fill="#240081"/><rect x="462.6" y="346" width="3.5" height="2" fill="#1a0081"/><rect x="462.6" y="348" width="3.5" height="2" fill="#220081"/><rect x="462.6" y="350" width="3.5" height="2" fill="#200081"/><rect x="462.6" y="352" width="3.5" height="2" fill="#0e0080"/><rect x="462.6" y="354" width="3.5" height="2" fill="#120080"/><rect x="462.6" y="356" width="3.5" height="2" fill="#000070"/><rect x="462.6" y="358" width="3.5" height="2" fill="#0e0080"/><rect x="462.7" y="360" width="3.5" height="2" fill="#010080"/><rect x="462.7" y="362" width="3.5" height="2" fill="#0a0080"/><rect x="462.7" y="364" width="3.5" height="2" fill="#040080"/><rect x="462.7" y="366" width="3.5" height="2" fill="#00006c"/><rect x="462.7" y="368" width="3.4" height="2" fill="#000058"/><rect x="462.7" y="370" width="3.4" height="2" fill="#070080"/><rect x="462.7" y="372" width="3.4" height="2" fill="#000055"/><rect x="462.8" y="374" width="3.4" height="2" fill="#000068"/><rect x="462.8" y="376" width="3.4" height="2" fill="#00005b"/><rect x="462.8" y="378" width="3.4" height="2" fill="#000054"/><rect x="462.8" y="380" width="3.4" height="2" fill="#00006d"/><rect x="462.8" y="382" width="3.4" height="2" fill="#000078"/><rect x="462.8" y="384" width="3.4" height="2" fill="#000046"/><rect x="462.8" y="386" width="3.4" height="2" fill="#00005b"/><rect x="462.8" y="388" width="3.4" height="2" fill="#000041"/><rect x="462.9" y="390" width="3.4" height="2" fill="#00004d"/><rect x="462.9" y="392" width="3.3" height="2" fill="#00003f"/><rect x="462.9" y="394" width="3.3" height="2" fill="#00002c"/><rect x="462.9" y="396" width="3.3" height="2" fill="#000028"/><rect x="462.9" y="398" width="3.3" height="2" fill="#000027"/><rect x="462.9" y="400" width="3.3" height="2" fill="#00004f"/><rect x="462.9" y="402" width="3.3" height="2" fill="#00002c"/><rect x="463.0" y="404" width="3.3" height="2" fill="#000011"/><rect x="463.0" y="406" width="3.3" height="2" fill="#000034"/><rect x="463.0" y="408" width="3.3" height="2" fill="#000031"/><rect x="463.0" y="410" width="3.3" height="2" fill="#000005"/><rect x="463.0" y="412" width="3.3" height="2" fill="#000000"/><rect x="463.0" y="414" width="3.3" height="2" fill="#000000"/><rect x="463.0" y="416" width="3.2" height="2" fill="#000000"/><rect x="463.0" y="418" width="3.2" height="2" fill="#000000"/><rect x="463.1" y="420" width="3.2" height="2" fill="#000000"/><rect x="463.1" y="422" width="3.2" height="2" fill="#000000"/><rect x="463.1" y="424" width="3.2" height="2" fill="#000000"/><rect x="462.2" y="10" width="1.2" height="2" fill="#0b0080"/><rect x="462.2" y="12" width="1.2" height="2" fill="#0d0080"/><rect x="462.2" y="14" width="1.2" height="2" fill="#120080"/><rect x="462.2" y="16" width="1.2" height="2" fill="#1c0081"/><rect x="462.2" y="18" width="1.3" height="2" fill="#150081"/><rect x="462.2" y="20" width="1.3" height="2" fill="#230081"/><rect x="462.2" y="22" width="1.3" height="2" fill="#200081"/><rect x="462.2" y="24" width="1.3" height="2" fill="#3e0082"/><rect x="462.2" y="26" width="1.3" height="2" fill="#420082"/><rect x="462.2" y="28" width="1.3" height="2" fill="#360081"/><rect x="462.2" y="30" width="1.3" height="2" fill="#2f0081"/><rect x="462.2" y="32" width="1.3" height="2" fill="#4d0081"/><rect x="462.2" y="34" width="1.4" height="2" fill="#370081"/><rect x="462.2" y="36" width="1.4" height="2" fill="#3c0082"/><rect x="462.2" y="38" width="1.4" height="2" fill="#310081"/><rect x="462.2" y="40" width="1.4" height="2" fill="#420082"/><rect x="462.2" y="42" width="1.4" height="2" fill="#490082"/><rect x="462.2" y="44" width="1.4" height="2" fill="#4d0081"/><rect x="462.2" y="46" width="1.4" height="2" fill="#440082"/><rect x="462.2" y="48" width="1.5" height="2" fill="#54007f"/><rect x="462.2" y="50" width="1.5" height="2" fill="#430082"/><rect x="462.3" y="52" width="1.5" height="2" fill="#500080"/><rect x="462.3" y="54" width="1.5" height="2" fill="#4c0082"/><rect x="462.3" y="56" width="1.5" height="2" fill="#5e007c"/><rect x="462.3" y="58" width="1.5" height="2" fill="#510080"/><rect x="462.3" y="60" width="1.5" height="2" fill="#54007f"/><rect x="462.3" y="62" width="1.5" height="2" fill="#64007a"/><rect x="462.3" y="64" width="1.6" height="2" fill="#640079"/><rect x="462.3" y="66" width="1.6" height="2" fill="#780073"/><rect x="462.3" y="68" width="1.6" height="2" fill="#780073"/><rect x="462.3" y="70" width="1.6" height="2" fill="#85066b"/><rect x="462.3" y="72" width="1.6" height="2" fill="#84066c"/><rect x="462.3" y="74" width="1.6" height="2" fill="#890c67"/><rect x="462.3" y="76" width="1.6" height="2" fill="#92175e"/><rect x="462.3" y="78" width="1.7" height="2" fill="#83046d"/><rect x="462.3" y="80" width="1.7" height="2" fill="#83046d"/><rect x="462.3" y="82" width="1.7" height="2" fill="#9e2752"/><rect x="462.3" y="84" width="1.7" height="2" fill="#82036e"/><rect x="462.3" y="86" width="1.7" height="2" fill="#9a2256"/><rect x="462.3" y="88" width="1.7" height="2" fill="#9a2256"/><rect x="462.3" y="90" width="1.7" height="2" fill="#870969"/><rect x="462.3" y="92" width="1.7" height="2" fill="#a6334a"/><rect x="462.3" y="94" width="1.8" height="2" fill="#ab3945"/><rect x="462.3" y="96" width="1.8" height="2" fill="#a5314b"/><rect x="462.3" y="98" width="1.8" height="2" fill="#ad3c43"/><rect x="462.3" y="100" width="1.8" height="2" fill="#b3443e"/><rect x="462.3" y="102" width="1.8" height="2" fill="#a02a50"/><rect x="462.3" y="104" width="1.9" height="2" fill="#b2423f"/><rect x="462.3" y="106" width="1.9" height="2" fill="#b5463e"/><rect x="462.3" y="108" width="1.9" height="2" fill="#c35837"/><rect x="462.3" y="110" width="1.9" height="2" fill="#c65b35"/><rect x="462.3" y="112" width="2.0" height="2" fill="#ca6133"/><rect x="462.3" y="114" width="2.0" height="2" fill="#c65c35"/><rect x="462.3" y="116" width="2.0" height="2" fill="#d36c2e"/><rect x="462.3" y="118" width="2.0" height="2" fill="#cf6730"/><rect x="462.3" y="120" width="2.1" height="2" fill="#d26b2f"/><rect x="462.3" y="122" width="2.1" height="2" fill="#c65c35"/><rect x="462.3" y="124" width="2.1" height="2" fill="#c35737"/><rect x="462.3" y="126" width="2.1" height="2" fill="#c95f34"/><rect x="462.3" y="128" width="2.2" height="2" fill="#d36b2f"/><rect x="462.2" y="130" width="2.2" height="2" fill="#cd6531"/><rect x="462.2" y="132" width="2.2" height="2" fill="#e78524"/><rect x="462.2" y="134" width="2.3" height="2" fill="#e17e27"/><rect x="462.2" y="136" width="2.3" height="2" fill="#e68425"/><rect x="462.2" y="138" width="2.3" height="2" fill="#e98724"/><rect x="462.2" y="140" width="2.3" height="2" fill="#ed8d21"/><rect x="462.2" y="142" width="2.4" height="2" fill="#ea8923"/><rect x="462.2" y="144" width="2.4" height="2" fill="#dd7929"/><rect x="462.2" y="146" width="2.4" height="2" fill="#f2991b"/><rect x="462.2" y="148" width="2.4" height="2" fill="#f29b1b"/><rect x="462.2" y="150" width="2.5" height="2" fill="#f1951d"/><rect x="462.2" y="152" width="2.5" height="2" fill="#f2981c"/><rect x="462.2" y="154" width="2.5" height="2" fill="#f39e19"/><rect x="462.2" y="156" width="2.5" height="2" fill="#ec8c22"/><rect x="462.2" y="158" width="2.6" height="2" fill="#f5a416"/><rect x="462.2" y="160" width="2.6" height="2" fill="#f1961d"/><rect x="462.2" y="162" width="2.6" height="2" fill="#f0921f"/><rect x="462.2" y="164" width="2.7" height="2" fill="#f29a1b"/><rect x="462.2" y="166" width="2.7" height="2" fill="#f6aa13"/><rect x="462.2" y="168" width="2.7" height="2" fill="#f39b1a"/><rect x="462.2" y="170" width="2.7" height="2" fill="#f7ae11"/><rect x="462.2" y="172" width="2.8" height="2" fill="#f9b70c"/><rect x="462.2" y="174" width="2.8" height="2" fill="#f6a913"/><rect x="462.2" y="176" width="2.8" height="2" fill="#f6a714"/><rect x="462.1" y="178" width="2.8" height="2" fill="#f7ac12"/><rect x="462.1" y="180" width="2.9" height="2" fill="#f9b40e"/><rect x="462.1" y="182" width="2.9" height="2" fill="#fab90c"/><rect x="462.1" y="184" width="2.9" height="2" fill="#f9b60d"/><rect x="462.1" y="186" width="2.9" height="2" fill="#f9b80c"/><rect x="462.1" y="188" width="3.0" height="2" fill="#f6a814"/><rect x="462.1" y="190" width="3.0" height="2" fill="#f8b010"/><rect x="462.1" y="192" width="3.1" height="2" fill="#faba0b"/><rect x="462.0" y="194" width="3.3" height="2" fill="#ffd002"/><rect x="461.9" y="196" width="3.4" height="2" fill="#fdc904"/><rect x="461.9" y="198" width="3.5" height="2" fill="#ffd82d"/><rect x="461.8" y="200" width="3.7" height="2" fill="#fecd01"/><rect x="461.8" y="202" width="3.8" height="2" fill="#ffd725"/><rect x="461.7" y="204" width="3.9" height="2" fill="#ffe67a"/><rect x="461.7" y="206" width="4.0" height="2" fill="#fffdf3"/><rect x="461.6" y="208" width="4.1" height="2" fill="#ffffff"/><rect x="461.6" y="210" width="4.2" height="2" fill="#ffffff"/><rect x="461.6" y="212" width="4.3" height="2" fill="#ffffff"/><rect x="461.6" y="214" width="4.4" height="2" fill="#ffffff"/><rect x="461.5" y="216" width="4.4" height="2" fill="#ffffff"/><rect x="461.5" y="218" width="4.5" height="2" fill="#ffffff"/><rect x="461.5" y="220" width="4.6" height="2" fill="#ffffff"/><rect x="461.4" y="222" width="4.7" height="2" fill="#ffffff"/><rect x="461.4" y="224" width="4.8" height="2" fill="#ffffff"/><rect x="461.5" y="226" width="4.5" height="2" fill="#ffffff"/><rect x="461.8" y="228" width="3.9" height="2" fill="#ffffff"/><rect x="462.1" y="230" width="3.5" height="2" fill="#faba0b"/><rect x="462.2" y="232" width="3.3" height="2" fill="#f5a714"/><rect x="462.3" y="234" width="3.1" height="2" fill="#f5a416"/><rect x="462.4" y="236" width="2.8" height="2" fill="#f29a1b"/><rect x="462.5" y="238" width="2.6" height="2" fill="#e78524"/><rect x="462.7" y="240" width="2.4" height="2" fill="#e07c28"/><rect x="462.7" y="242" width="2.4" height="2" fill="#dc772a"/><rect x="462.7" y="244" width="2.4" height="2" fill="#f1921f"/><rect x="462.7" y="246" width="2.4" height="2" fill="#d9732c"/><rect x="462.7" y="248" width="2.4" height="2" fill="#e38026"/><rect x="462.7" y="250" width="2.4" height="2" fill="#d36c2e"/><rect x="462.7" y="252" width="2.3" height="2" fill="#de7929"/><rect x="462.7" y="254" width="2.3" height="2" fill="#ea8823"/><rect x="462.8" y="256" width="2.3" height="2" fill="#cd6531"/><rect x="462.8" y="258" width="2.3" height="2" fill="#e07c28"/><rect x="462.8" y="260" width="2.3" height="2" fill="#d36c2f"/><rect x="462.8" y="262" width="2.3" height="2" fill="#dc772a"/><rect x="462.8" y="264" width="2.3" height="2" fill="#d36b2f"/><rect x="462.8" y="266" width="2.3" height="2" fill="#c05538"/><rect x="462.8" y="268" width="2.3" height="2" fill="#d36b2f"/><rect x="462.9" y="270" width="2.3" height="2" fill="#c25737"/><rect x="462.9" y="272" width="2.3" height="2" fill="#b04040"/><rect x="462.9" y="274" width="2.3" height="2" fill="#ac3b44"/><rect x="462.9" y="276" width="2.2" height="2" fill="#b94b3b"/><rect x="462.9" y="278" width="2.2" height="2" fill="#b5473d"/><rect x="462.9" y="280" width="2.2" height="2" fill="#ae3d42"/><rect x="462.9" y="282" width="2.2" height="2" fill="#a5314b"/><rect x="462.9" y="284" width="2.2" height="2" fill="#aa3746"/><rect x="463.0" y="286" width="2.2" height="2" fill="#a6324a"/><rect x="463.0" y="288" width="2.2" height="2" fill="#b5463d"/><rect x="463.0" y="290" width="2.2" height="2" fill="#951c5b"/><rect x="463.0" y="292" width="2.2" height="2" fill="#ad3c43"/><rect x="463.0" y="294" width="2.2" height="2" fill="#ad3c43"/><rect x="463.0" y="296" width="2.2" height="2" fill="#901660"/><rect x="463.0" y="298" width="2.2" height="2" fill="#aa3946"/><rect x="463.1" y="300" width="2.1" height="2" fill="#a02b50"/><rect x="463.1" y="302" width="2.1" height="2" fill="#a4304c"/><rect x="463.1" y="304" width="2.1" height="2" fill="#8b0f65"/><rect x="463.1" y="306" width="2.1" height="2" fill="#8b0f65"/><rect x="463.1" y="308" width="2.1" height="2" fill="#890c67"/><rect x="463.1" y="310" width="2.1" height="2" fill="#9c2554"/><rect x="463.1" y="312" width="2.1" height="2" fill="#8a0e66"/><rect x="463.1" y="314" width="2.1" height="2" fill="#7f0070"/><rect x="463.2" y="316" width="2.1" height="2" fill="#7f0070"/><rect x="463.2" y="318" width="2.1" height="2" fill="#740074"/><rect x="463.2" y="320" width="2.1" height="2" fill="#660079"/><rect x="463.2" y="322" width="2.0" height="2" fill="#650079"/><rect x="463.2" y="324" width="2.0" height="2" fill="#82036e"/><rect x="463.2" y="326" width="2.0" height="2" fill="#670079"/><rect x="463.2" y="328" width="2.0" height="2" fill="#81016f"/><rect x="463.3" y="330" width="2.0" height="2" fill="#5e007c"/><rect x="463.3" y="332" width="2.0" height="2" fill="#5b007c"/><rect x="463.3" y="334" width="2.0" height="2" fill="#63007a"/><rect x="463.3" y="336" width="2.0" height="2" fill="#510080"/><rect x="463.3" y="338" width="2.0" height="2" fill="#56007e"/><rect x="463.3" y="340" width="2.0" height="2" fill="#6d0076"/><rect x="463.3" y="342" width="2.0" height="2" fill="#660079"/><rect x="463.3" y="344" width="2.0" height="2" fill="#5f007b"/><rect x="463.4" y="346" width="1.9" height="2" fill="#54007f"/><rect x="463.4" y="348" width="1.9" height="2" fill="#5d007c"/><rect x="463.4" y="350" width="1.9" height="2" fill="#5b007d"/><rect x="463.4" y="352" width="1.9" height="2" fill="#470082"/><rect x="463.4" y="354" width="1.9" height="2" fill="#4b0082"/><rect x="463.4" y="356" width="1.9" height="2" fill="#2f0081"/><rect x="463.4" y="358" width="1.9" height="2" fill="#460082"/><rect x="463.5" y="360" width="1.9" height="2" fill="#3a0082"/><rect x="463.5" y="362" width="1.9" height="2" fill="#430082"/><rect x="463.5" y="364" width="1.9" height="2" fill="#3c0082"/><rect x="463.5" y="366" width="1.9" height="2" fill="#2c0081"/><rect x="463.5" y="368" width="1.8" height="2" fill="#210081"/><rect x="463.5" y="370" width="1.8" height="2" fill="#400082"/><rect x="463.5" y="372" width="1.8" height="2" fill="#1f0081"/><rect x="463.6" y="374" width="1.8" height="2" fill="#2a0081"/><rect x="463.6" y="376" width="1.8" height="2" fill="#230081"/><rect x="463.6" y="378" width="1.8" height="2" fill="#1f0081"/><rect x="463.6" y="380" width="1.8" height="2" fill="#2d0081"/><rect x="463.6" y="382" width="1.8" height="2" fill="#330081"/><rect x="463.6" y="384" width="1.8" height="2" fill="#160081"/><rect x="463.6" y="386" width="1.8" height="2" fill="#230081"/><rect x="463.6" y="388" width="1.8" height="2" fill="#130081"/><rect x="463.7" y="390" width="1.8" height="2" fill="#1a0081"/><rect x="463.7" y="392" width="1.7" height="2" fill="#120080"/><rect x="463.7" y="394" width="1.7" height="2" fill="#070080"/><rect x="463.7" y="396" width="1.7" height="2" fill="#040080"/><rect x="463.7" y="398" width="1.7" height="2" fill="#040080"/><rect x="463.7" y="400" width="1.7" height="2" fill="#1c0081"/><rect x="463.7" y="402" width="1.7" height="2" fill="#070080"/><rect x="463.8" y="404" width="1.7" height="2" fill="#000071"/><rect x="463.8" y="406" width="1.7" height="2" fill="#0c0080"/><rect x="463.8" y="408" width="1.7" height="2" fill="#0a0080"/><rect x="463.8" y="410" width="1.7" height="2" fill="#000065"/><rect x="463.8" y="412" width="1.7" height="2" fill="#000048"/><rect x="463.8" y="414" width="1.7" height="2" fill="#000042"/><rect x="463.8" y="416" width="1.6" height="2" fill="#000033"/><rect x="463.8" y="418" width="1.6" height="2" fill="#00003a"/><rect x="463.9" y="420" width="1.6" height="2" fill="#000021"/><rect x="463.9" y="422" width="1.6" height="2" fill="#000021"/><rect x="463.9" y="424" width="1.6" height="2" fill="#00001a"/><rect x="573.9" y="127" width="3.8" height="2" fill="#000000"/><rect x="573.9" y="129" width="3.8" height="2" fill="#000000"/><rect x="573.9" y="131" width="3.8" height="2" fill="#000000"/><rect x="573.9" y="133" width="3.8" height="2" fill="#000000"/><rect x="573.9" y="135" width="3.8" height="2" fill="#000000"/><rect x="573.9" y="137" width="3.8" height="2" fill="#000000"/><rect x="573.9" y="139" width="3.8" height="2" fill="#000000"/><rect x="573.9" y="141" width="3.8" height="2" fill="#000000"/><rect x="573.9" y="143" width="3.8" height="2" fill="#000000"/><rect x="573.9" y="145" width="3.8" height="2" fill="#000000"/><rect x="573.9" y="147" width="3.8" height="2" fill="#000026"/><rect x="573.9" y="149" width="3.8" height="2" fill="#000000"/><rect x="573.9" y="151" width="3.8" height="2" fill="#000010"/><rect x="573.9" y="153" width="3.9" height="2" fill="#00001c"/><rect x="573.9" y="155" width="3.9" height="2" fill="#00002f"/><rect x="573.9" y="157" width="3.9" height="2" fill="#000009"/><rect x="573.9" y="159" width="3.9" height="2" fill="#000011"/><rect x="573.9" y="161" width="3.9" height="2" fill="#000013"/><rect x="573.9" y="163" width="3.9" height="2" fill="#000021"/><rect x="573.9" y="165" width="3.9" height="2" fill="#000028"/><rect x="573.9" y="167" width="3.9" height="2" fill="#00004c"/><rect x="573.9" y="169" width="3.9" height="2" fill="#00004a"/><rect x="573.9" y="171" width="3.9" height="2" fill="#000053"/><rect x="573.9" y="173" width="3.9" height="2" fill="#000027"/><rect x="573.9" y="175" width="3.9" height="2" fill="#000032"/><rect x="574.0" y="177" width="3.9" height="2" fill="#000068"/><rect x="574.0" y="179" width="3.9" height="2" fill="#00007f"/><rect x="574.0" y="181" width="3.9" height="2" fill="#00006e"/><rect x="574.0" y="183" width="3.9" height="2" fill="#000080"/><rect x="574.0" y="185" width="3.9" height="2" fill="#000065"/><rect x="574.0" y="187" width="3.9" height="2" fill="#050080"/><rect x="574.0" y="189" width="3.9" height="2" fill="#200081"/><rect x="574.0" y="191" width="3.9" height="2" fill="#220081"/><rect x="574.0" y="193" width="3.9" height="2" fill="#280081"/><rect x="574.0" y="195" width="3.9" height="2" fill="#320081"/><rect x="574.0" y="197" width="3.9" height="2" fill="#1d0081"/><rect x="574.0" y="199" width="3.9" height="2" fill="#1d0081"/><rect x="574.0" y="201" width="4.0" height="2" fill="#240081"/><rect x="574.0" y="203" width="4.0" height="2" fill="#380081"/><rect x="574.0" y="205" width="4.0" height="2" fill="#430082"/><rect x="574.0" y="207" width="4.0" height="2" fill="#54007f"/><rect x="574.0" y="209" width="4.0" height="2" fill="#470082"/><rect x="574.0" y="211" width="4.0" height="2" fill="#380081"/><rect x="574.0" y="213" width="4.0" height="2" fill="#53007f"/><rect x="574.0" y="215" width="4.0" height="2" fill="#870a69"/><rect x="574.0" y="217" width="4.0" height="2" fill="#a5324b"/><rect x="574.0" y="219" width="4.0" height="2" fill="#92185e"/><rect x="574.0" y="221" width="4.0" height="2" fill="#ac3b44"/><rect x="574.0" y="223" width="4.0" height="2" fill="#971f59"/><rect x="574.0" y="225" width="4.0" height="2" fill="#af3f41"/><rect x="574.0" y="227" width="4.0" height="2" fill="#a5314b"/><rect x="574.0" y="229" width="4.0" height="2" fill="#981f58"/><rect x="574.0" y="231" width="4.0" height="2" fill="#901660"/><rect x="574.0" y="233" width="4.0" height="2" fill="#941b5c"/><rect x="574.0" y="235" width="4.0" height="2" fill="#a12c4f"/><rect x="574.0" y="237" width="4.0" height="2" fill="#a22e4e"/><rect x="574.0" y="239" width="4.0" height="2" fill="#8d1163"/><rect x="574.0" y="241" width="4.0" height="2" fill="#8a0e66"/><rect x="574.0" y="243" width="4.0" height="2" fill="#9a2256"/><rect x="574.0" y="245" width="4.0" height="2" fill="#9b2455"/><rect x="574.0" y="247" width="4.0" height="2" fill="#870969"/><rect x="574.0" y="249" width="4.1" height="2" fill="#710075"/><rect x="574.0" y="251" width="4.1" height="2" fill="#720075"/><rect x="574.0" y="253" width="4.1" height="2" fill="#480082"/><rect x="574.0" y="255" width="4.1" height="2" fill="#450082"/><rect x="574.0" y="257" width="4.1" height="2" fill="#3e0082"/><rect x="574.0" y="259" width="4.1" height="2" fill="#470082"/><rect x="574.0" y="261" width="4.1" height="2" fill="#350081"/><rect x="574.0" y="263" width="4.1" height="2" fill="#390082"/><rect x="574.0" y="265" width="4.1" height="2" fill="#240081"/><rect x="574.0" y="267" width="4.1" height="2" fill="#160081"/><rect x="574.0" y="269" width="4.1" height="2" fill="#110080"/><rect x="574.0" y="271" width="4.1" height="2" fill="#260081"/><rect x="574.1" y="273" width="4.1" height="2" fill="#170081"/><rect x="574.1" y="275" width="4.1" height="2" fill="#030080"/><rect x="574.1" y="277" width="4.1" height="2" fill="#000069"/><rect x="574.1" y="279" width="4.1" height="2" fill="#00007e"/><rect x="574.1" y="281" width="4.1" height="2" fill="#000080"/><rect x="574.1" y="283" width="4.1" height="2" fill="#000066"/><rect x="574.1" y="285" width="4.1" height="2" fill="#000052"/><rect x="574.1" y="287" width="4.1" height="2" fill="#000063"/><rect x="574.1" y="289" width="4.1" height="2" fill="#00006b"/><rect x="574.1" y="291" width="4.1" height="2" fill="#000033"/><rect x="574.1" y="293" width="4.1" height="2" fill="#00001c"/><rect x="574.1" y="295" width="4.1" height="2" fill="#000024"/><rect x="574.1" y="297" width="4.2" height="2" fill="#00001e"/><rect x="574.1" y="299" width="4.2" height="2" fill="#000023"/><rect x="574.1" y="301" width="4.2" height="2" fill="#000000"/><rect x="574.1" y="303" width="4.2" height="2" fill="#000014"/><rect x="574.1" y="305" width="4.2" height="2" fill="#000005"/><rect x="574.1" y="307" width="4.2" height="2" fill="#000000"/><rect x="574.1" y="309" width="4.2" height="2" fill="#000000"/><rect x="574.1" y="311" width="4.2" height="2" fill="#000000"/><rect x="574.1" y="313" width="4.2" height="2" fill="#000000"/><rect x="574.1" y="315" width="4.2" height="2" fill="#000000"/><rect x="574.1" y="317" width="4.2" height="2" fill="#000000"/><rect x="574.1" y="319" width="4.2" height="2" fill="#000000"/><rect x="574.9" y="127" width="1.8" height="2" fill="#000064"/><rect x="574.9" y="129" width="1.8" height="2" fill="#00007d"/><rect x="574.9" y="131" width="1.8" height="2" fill="#000078"/><rect x="574.9" y="133" width="1.8" height="2" fill="#000066"/><rect x="574.9" y="135" width="1.8" height="2" fill="#00006a"/><rect x="574.9" y="137" width="1.8" height="2" fill="#000075"/><rect x="574.9" y="139" width="1.8" height="2" fill="#000070"/><rect x="574.9" y="141" width="1.8" height="2" fill="#000071"/><rect x="574.9" y="143" width="1.8" height="2" fill="#000064"/><rect x="574.9" y="145" width="1.8" height="2" fill="#000075"/><rect x="574.9" y="147" width="1.8" height="2" fill="#160081"/><rect x="574.9" y="149" width="1.8" height="2" fill="#000074"/><rect x="574.9" y="151" width="1.8" height="2" fill="#090080"/><rect x="574.9" y="153" width="1.9" height="2" fill="#100080"/><rect x="574.9" y="155" width="1.9" height="2" fill="#1b0081"/><rect x="574.9" y="157" width="1.9" height="2" fill="#050080"/><rect x="574.9" y="159" width="1.9" height="2" fill="#0a0080"/><rect x="574.9" y="161" width="1.9" height="2" fill="#0b0080"/><rect x="574.9" y="163" width="1.9" height="2" fill="#130081"/><rect x="574.9" y="165" width="1.9" height="2" fill="#170081"/><rect x="574.9" y="167" width="1.9" height="2" fill="#2d0081"/><rect x="574.9" y="169" width="1.9" height="2" fill="#2b0081"/><rect x="574.9" y="171" width="1.9" height="2" fill="#300081"/><rect x="574.9" y="173" width="1.9" height="2" fill="#170081"/><rect x="574.9" y="175" width="1.9" height="2" fill="#1d0081"/><rect x="575.0" y="177" width="1.9" height="2" fill="#3d0082"/><rect x="575.0" y="179" width="1.9" height="2" fill="#4a0082"/><rect x="575.0" y="181" width="1.9" height="2" fill="#410082"/><rect x="575.0" y="183" width="1.9" height="2" fill="#4b0082"/><rect x="575.0" y="185" width="1.9" height="2" fill="#3b0082"/><rect x="575.0" y="187" width="1.9" height="2" fill="#510080"/><rect x="575.0" y="189" width="1.9" height="2" fill="#710075"/><rect x="575.0" y="191" width="1.9" height="2" fill="#740074"/><rect x="575.0" y="193" width="1.9" height="2" fill="#7c0071"/><rect x="575.0" y="195" width="1.9" height="2" fill="#86086a"/><rect x="575.0" y="197" width="1.9" height="2" fill="#6e0076"/><rect x="575.0" y="199" width="1.9" height="2" fill="#6e0076"/><rect x="575.0" y="201" width="2.0" height="2" fill="#770073"/><rect x="575.0" y="203" width="2.0" height="2" fill="#8b0f65"/><rect x="575.0" y="205" width="2.0" height="2" fill="#971e59"/><rect x="575.0" y="207" width="2.0" height="2" fill="#a5324b"/><rect x="575.0" y="209" width="2.0" height="2" fill="#9a2356"/><rect x="575.0" y="211" width="2.0" height="2" fill="#8b0f65"/><rect x="575.0" y="213" width="2.0" height="2" fill="#a5314b"/><rect x="575.0" y="215" width="2.0" height="2" fill="#cc6332"/><rect x="575.0" y="217" width="2.0" height="2" fill="#e78425"/><rect x="575.0" y="219" width="2.0" height="2" fill="#d56f2d"/><rect x="575.0" y="221" width="2.0" height="2" fill="#ed8c22"/><rect x="575.0" y="223" width="2.0" height="2" fill="#da752b"/><rect x="575.0" y="225" width="2.0" height="2" fill="#ef8f20"/><rect x="575.0" y="227" width="2.0" height="2" fill="#e68325"/><rect x="575.0" y="229" width="2.0" height="2" fill="#da752b"/><rect x="575.0" y="231" width="2.0" height="2" fill="#d46d2e"/><rect x="575.0" y="233" width="2.0" height="2" fill="#d7712c"/><rect x="575.0" y="235" width="2.0" height="2" fill="#e37f27"/><rect x="575.0" y="237" width="2.0" height="2" fill="#e48126"/><rect x="575.0" y="239" width="2.0" height="2" fill="#d06930"/><rect x="575.0" y="241" width="2.0" height="2" fill="#ce6631"/><rect x="575.0" y="243" width="2.0" height="2" fill="#dc772a"/><rect x="575.0" y="245" width="2.0" height="2" fill="#dd7929"/><rect x="575.0" y="247" width="2.0" height="2" fill="#cc6232"/><rect x="575.0" y="249" width="2.1" height="2" fill="#bb4e3b"/><rect x="575.0" y="251" width="2.1" height="2" fill="#bb4e3a"/><rect x="575.0" y="253" width="2.1" height="2" fill="#9b2455"/><rect x="575.0" y="255" width="2.1" height="2" fill="#982058"/><rect x="575.0" y="257" width="2.1" height="2" fill="#91175f"/><rect x="575.0" y="259" width="2.1" height="2" fill="#9a2356"/><rect x="575.0" y="261" width="2.1" height="2" fill="#890c67"/><rect x="575.0" y="263" width="2.1" height="2" fill="#8d1163"/><rect x="575.0" y="265" width="2.1" height="2" fill="#770073"/><rect x="575.0" y="267" width="2.1" height="2" fill="#650079"/><rect x="575.0" y="269" width="2.1" height="2" fill="#5f007b"/><rect x="575.0" y="271" width="2.1" height="2" fill="#790072"/><rect x="575.1" y="273" width="2.1" height="2" fill="#670079"/><rect x="575.1" y="275" width="2.1" height="2" fill="#4e0081"/><rect x="575.1" y="277" width="2.1" height="2" fill="#3d0082"/><rect x="575.1" y="279" width="2.1" height="2" fill="#4a0082"/><rect x="575.1" y="281" width="2.1" height="2" fill="#4b0082"/><rect x="575.1" y="283" width="2.1" height="2" fill="#3c0082"/><rect x="575.1" y="285" width="2.1" height="2" fill="#300081"/><rect x="575.1" y="287" width="2.1" height="2" fill="#3a0082"/><rect x="575.1" y="289" width="2.1" height="2" fill="#3e0082"/><rect x="575.1" y="291" width="2.1" height="2" fill="#1e0081"/><rect x="575.1" y="293" width="2.1" height="2" fill="#100080"/><rect x="575.1" y="295" width="2.1" height="2" fill="#150081"/><rect x="575.1" y="297" width="2.2" height="2" fill="#110080"/><rect x="575.1" y="299" width="2.2" height="2" fill="#150081"/><rect x="575.1" y="301" width="2.2" height="2" fill="#000079"/><rect x="575.1" y="303" width="2.2" height="2" fill="#0c0080"/><rect x="575.1" y="305" width="2.2" height="2" fill="#030080"/><rect x="575.1" y="307" width="2.2" height="2" fill="#00006a"/><rect x="575.1" y="309" width="2.2" height="2" fill="#00004c"/><rect x="575.1" y="311" width="2.2" height="2" fill="#000071"/><rect x="575.1" y="313" width="2.2" height="2" fill="#00003c"/><rect x="575.1" y="315" width="2.2" height="2" fill="#000051"/><rect x="575.1" y="317" width="2.2" height="2" fill="#000020"/><rect x="575.1" y="319" width="2.2" height="2" fill="#000014"/><rect x="574.4" y="40" width="2.5" height="3" fill="#000000"/><rect x="574.4" y="43" width="2.5" height="3" fill="#000000"/><rect x="574.4" y="46" width="2.5" height="3" fill="#000000"/><rect x="574.4" y="49" width="2.5" height="3" fill="#000000"/><rect x="574.4" y="52" width="2.5" height="3" fill="#000000"/><rect x="574.4" y="55" width="2.6" height="3" fill="#000000"/><rect x="574.4" y="58" width="2.6" height="3" fill="#000000"/><rect x="574.4" y="61" width="2.6" height="3" fill="#000000"/><rect x="574.4" y="64" width="2.6" height="3" fill="#00000d"/><rect x="574.4" y="67" width="2.6" height="3" fill="#000000"/><rect x="574.4" y="70" width="2.6" height="3" fill="#000000"/><rect x="574.4" y="73" width="2.6" height="3" fill="#000000"/><rect x="574.4" y="76" width="2.6" height="3" fill="#00001b"/><rect x="574.4" y="79" width="2.6" height="3" fill="#000000"/><rect x="574.4" y="82" width="2.6" height="3" fill="#000000"/><rect x="574.4" y="85" width="2.7" height="3" fill="#000000"/><rect x="574.4" y="88" width="2.7" height="3" fill="#000003"/><rect x="574.4" y="91" width="2.7" height="3" fill="#000027"/><rect x="574.4" y="94" width="2.7" height="3" fill="#000029"/><rect x="574.4" y="97" width="2.7" height="3" fill="#000023"/><rect x="574.4" y="100" width="2.7" height="3" fill="#000037"/><rect x="574.4" y="103" width="2.7" height="3" fill="#000036"/><rect x="574.4" y="106" width="2.7" height="3" fill="#000013"/><rect x="574.4" y="109" width="2.7" height="3" fill="#00000d"/><rect x="574.4" y="112" width="2.7" height="3" fill="#000041"/><rect x="574.4" y="115" width="2.8" height="3" fill="#000038"/><rect x="574.4" y="118" width="2.8" height="3" fill="#00000d"/><rect x="574.4" y="121" width="2.8" height="3" fill="#000039"/><rect x="574.4" y="124" width="2.8" height="3" fill="#00002a"/><rect x="574.9" y="40" width="1.5" height="3" fill="#00001b"/><rect x="574.9" y="43" width="1.5" height="3" fill="#000001"/><rect x="574.9" y="46" width="1.5" height="3" fill="#00002e"/><rect x="574.9" y="49" width="1.5" height="3" fill="#000014"/><rect x="574.9" y="52" width="1.5" height="3" fill="#000004"/><rect x="574.9" y="55" width="1.6" height="3" fill="#00000a"/><rect x="574.9" y="58" width="1.6" height="3" fill="#000019"/><rect x="574.9" y="61" width="1.6" height="3" fill="#00002c"/><rect x="574.9" y="64" width="1.6" height="3" fill="#000042"/><rect x="574.9" y="67" width="1.6" height="3" fill="#000012"/><rect x="574.9" y="70" width="1.6" height="3" fill="#000025"/><rect x="574.9" y="73" width="1.6" height="3" fill="#00001d"/><rect x="574.9" y="76" width="1.6" height="3" fill="#000051"/><rect x="574.9" y="79" width="1.6" height="3" fill="#00001f"/><rect x="574.9" y="82" width="1.6" height="3" fill="#00001c"/><rect x="574.9" y="85" width="1.7" height="3" fill="#000020"/><rect x="574.9" y="88" width="1.7" height="3" fill="#000039"/><rect x="574.9" y="91" width="1.7" height="3" fill="#00005c"/><rect x="574.9" y="94" width="1.7" height="3" fill="#00005f"/><rect x="574.9" y="97" width="1.7" height="3" fill="#000058"/><rect x="574.9" y="100" width="1.7" height="3" fill="#00006d"/><rect x="574.9" y="103" width="1.7" height="3" fill="#00006c"/><rect x="574.9" y="106" width="1.7" height="3" fill="#000049"/><rect x="574.9" y="109" width="1.7" height="3" fill="#000043"/><rect x="574.9" y="112" width="1.7" height="3" fill="#000076"/><rect x="574.9" y="115" width="1.8" height="3" fill="#00006d"/><rect x="574.9" y="118" width="1.8" height="3" fill="#000043"/><rect x="574.9" y="121" width="1.8" height="3" fill="#00006f"/><rect x="574.9" y="124" width="1.8" height="3" fill="#000060"/><rect x="281.0" y="178" width="4.0" height="2" fill="#000000"/><rect x="281.0" y="180" width="4.1" height="2" fill="#000000"/><rect x="280.9" y="182" width="4.1" height="2" fill="#000000"/><rect x="280.9" y="184" width="4.2" height="2" fill="#000000"/><rect x="280.9" y="186" width="4.3" height="2" fill="#00000f"/><rect x="280.8" y="188" width="4.4" height="2" fill="#00001e"/><rect x="280.8" y="190" width="4.4" height="2" fill="#00004f"/><rect x="280.7" y="192" width="4.5" height="2" fill="#000024"/><rect x="280.7" y="194" width="4.6" height="2" fill="#000063"/><rect x="280.7" y="196" width="4.7" height="2" fill="#00004b"/><rect x="280.6" y="198" width="4.7" height="2" fill="#000079"/><rect x="280.6" y="200" width="4.8" height="2" fill="#230081"/><rect x="280.6" y="202" width="4.9" height="2" fill="#390082"/><rect x="280.5" y="204" width="5.0" height="2" fill="#5b007d"/><rect x="280.5" y="206" width="5.0" height="2" fill="#971e59"/><rect x="280.4" y="208" width="5.1" height="2" fill="#c45a36"/><rect x="280.4" y="210" width="5.2" height="2" fill="#c15637"/><rect x="280.4" y="212" width="5.3" height="2" fill="#d36b2f"/><rect x="280.3" y="214" width="5.4" height="2" fill="#bc4e3a"/><rect x="280.3" y="216" width="5.4" height="2" fill="#93195d"/><rect x="280.4" y="218" width="5.3" height="2" fill="#740074"/><rect x="280.4" y="220" width="5.2" height="2" fill="#3f0082"/><rect x="280.4" y="222" width="5.2" height="2" fill="#3f0082"/><rect x="280.5" y="224" width="5.1" height="2" fill="#410082"/><rect x="280.5" y="226" width="5.0" height="2" fill="#320081"/><rect x="280.5" y="228" width="5.0" height="2" fill="#090080"/><rect x="280.6" y="230" width="4.9" height="2" fill="#000078"/><rect x="280.6" y="232" width="4.8" height="2" fill="#000069"/><rect x="280.6" y="234" width="4.7" height="2" fill="#0a0080"/><rect x="280.7" y="236" width="4.7" height="2" fill="#000056"/><rect x="280.7" y="238" width="4.6" height="2" fill="#000065"/><rect x="280.7" y="240" width="4.5" height="2" fill="#00005f"/><rect x="280.8" y="242" width="4.5" height="2" fill="#00002b"/><rect x="280.8" y="244" width="4.4" height="2" fill="#000017"/><rect x="280.8" y="246" width="4.3" height="2" fill="#000033"/><rect x="280.9" y="248" width="4.3" height="2" fill="#00000d"/><rect x="282.0" y="178" width="2.0" height="2" fill="#00006d"/><rect x="282.0" y="180" width="2.1" height="2" fill="#000075"/><rect x="281.9" y="182" width="2.1" height="2" fill="#000074"/><rect x="281.9" y="184" width="2.2" height="2" fill="#000074"/><rect x="281.9" y="186" width="2.3" height="2" fill="#090080"/><rect x="281.8" y="188" width="2.4" height="2" fill="#120080"/><rect x="281.8" y="190" width="2.4" height="2" fill="#2e0081"/><rect x="281.7" y="192" width="2.5" height="2" fill="#150081"/><rect x="281.7" y="194" width="2.6" height="2" fill="#3a0082"/><rect x="281.7" y="196" width="2.7" height="2" fill="#2c0081"/><rect x="281.6" y="198" width="2.7" height="2" fill="#470082"/><rect x="281.6" y="200" width="2.8" height="2" fill="#760073"/><rect x="281.6" y="202" width="2.9" height="2" fill="#8d1163"/><rect x="281.5" y="204" width="3.0" height="2" fill="#ab3945"/><rect x="281.5" y="206" width="3.0" height="2" fill="#da742b"/><rect x="281.4" y="208" width="3.1" height="2" fill="#f5a416"/><rect x="281.4" y="210" width="3.2" height="2" fill="#f4a117"/><rect x="281.4" y="212" width="3.3" height="2" fill="#f8b30f"/><rect x="281.3" y="214" width="3.4" height="2" fill="#f39c1a"/><rect x="281.3" y="216" width="3.4" height="2" fill="#d6702d"/><rect x="281.4" y="218" width="3.3" height="2" fill="#bd503a"/><rect x="281.4" y="220" width="3.2" height="2" fill="#92185e"/><rect x="281.4" y="222" width="3.2" height="2" fill="#93195d"/><rect x="281.5" y="224" width="3.1" height="2" fill="#941b5c"/><rect x="281.5" y="226" width="3.0" height="2" fill="#86076a"/><rect x="281.5" y="228" width="3.0" height="2" fill="#56007e"/><rect x="281.6" y="230" width="2.9" height="2" fill="#460082"/><rect x="281.6" y="232" width="2.8" height="2" fill="#3e0082"/><rect x="281.6" y="234" width="2.7" height="2" fill="#57007e"/><rect x="281.7" y="236" width="2.7" height="2" fill="#320081"/><rect x="281.7" y="238" width="2.6" height="2" fill="#3b0082"/><rect x="281.7" y="240" width="2.5" height="2" fill="#380081"/><rect x="281.8" y="242" width="2.5" height="2" fill="#190081"/><rect x="281.8" y="244" width="2.4" height="2" fill="#0d0080"/><rect x="281.8" y="246" width="2.3" height="2" fill="#1e0081"/><rect x="281.9" y="248" width="2.3" height="2" fill="#080080"/><rect x="424.4" y="188" width="3.2" height="2" fill="#000000"/><rect x="424.4" y="190" width="3.3" height="2" fill="#00002a"/><rect x="424.3" y="192" width="3.4" height="2" fill="#000022"/><rect x="424.3" y="194" width="3.5" height="2" fill="#000032"/><rect x="424.2" y="196" width="3.6" height="2" fill="#000032"/><rect x="424.2" y="198" width="3.7" height="2" fill="#000074"/><rect x="424.1" y="200" width="3.8" height="2" fill="#090080"/><rect x="424.1" y="202" width="3.9" height="2" fill="#1b0081"/><rect x="424.0" y="204" width="4.0" height="2" fill="#430082"/><rect x="424.0" y="206" width="4.1" height="2" fill="#3c0082"/><rect x="423.9" y="208" width="4.2" height="2" fill="#650079"/><rect x="423.9" y="210" width="4.3" height="2" fill="#971f59"/><rect x="423.8" y="212" width="4.4" height="2" fill="#c96033"/><rect x="423.8" y="214" width="4.5" height="2" fill="#8a0e66"/><rect x="423.7" y="216" width="4.6" height="2" fill="#270081"/><rect x="425.2" y="188" width="1.6" height="2" fill="#00007b"/><rect x="425.2" y="190" width="1.7" height="2" fill="#190081"/><rect x="425.1" y="192" width="1.8" height="2" fill="#140081"/><rect x="425.1" y="194" width="1.9" height="2" fill="#1d0081"/><rect x="425.0" y="196" width="2.0" height="2" fill="#1d0081"/><rect x="425.0" y="198" width="2.1" height="2" fill="#440082"/><rect x="424.9" y="200" width="2.2" height="2" fill="#56007e"/><rect x="424.9" y="202" width="2.3" height="2" fill="#6c0077"/><rect x="424.8" y="204" width="2.4" height="2" fill="#961d5a"/><rect x="424.8" y="206" width="2.5" height="2" fill="#901560"/><rect x="424.7" y="208" width="2.6" height="2" fill="#b2433f"/><rect x="424.7" y="210" width="2.7" height="2" fill="#da742b"/><rect x="424.6" y="212" width="2.8" height="2" fill="#f6a913"/><rect x="424.6" y="214" width="2.9" height="2" fill="#cf6631"/><rect x="424.5" y="216" width="3.0" height="2" fill="#7b0072"/><rect x="488.2" y="184" width="3.6" height="2" fill="#000000"/><rect x="488.2" y="186" width="3.6" height="2" fill="#000029"/><rect x="488.2" y="188" width="3.7" height="2" fill="#000050"/><rect x="488.1" y="190" width="3.7" height="2" fill="#080080"/><rect x="488.1" y="192" width="3.8" height="2" fill="#010080"/><rect x="488.1" y="194" width="3.8" height="2" fill="#060080"/><rect x="488.1" y="196" width="3.9" height="2" fill="#000067"/><rect x="488.0" y="198" width="3.9" height="2" fill="#00004e"/><rect x="488.0" y="200" width="4.0" height="2" fill="#00002c"/><rect x="489.0" y="184" width="2.0" height="2" fill="#00007b"/><rect x="489.0" y="186" width="2.0" height="2" fill="#180081"/><rect x="489.0" y="188" width="2.1" height="2" fill="#2f0081"/><rect x="488.9" y="190" width="2.1" height="2" fill="#55007f"/><rect x="488.9" y="192" width="2.2" height="2" fill="#4c0082"/><rect x="488.9" y="194" width="2.2" height="2" fill="#520080"/><rect x="488.9" y="196" width="2.3" height="2" fill="#3c0082"/><rect x="488.8" y="198" width="2.3" height="2" fill="#2d0081"/><rect x="488.8" y="200" width="2.4" height="2" fill="#1a0081"/><rect x="696.2" y="219" width="4.8" height="2" fill="#230081"/><rect x="696.2" y="221" width="4.7" height="2" fill="#7d0071"/><rect x="696.3" y="223" width="4.7" height="2" fill="#b14140"/><rect x="696.3" y="225" width="4.6" height="2" fill="#bf5239"/><rect x="696.3" y="227" width="4.5" height="2" fill="#d9732b"/><rect x="696.4" y="229" width="4.4" height="2" fill="#951c5b"/><rect x="696.4" y="231" width="4.4" height="2" fill="#63007a"/><rect x="696.5" y="233" width="4.3" height="2" fill="#460082"/><rect x="696.5" y="235" width="4.2" height="2" fill="#090080"/><rect x="696.5" y="237" width="4.1" height="2" fill="#00003d"/><rect x="696.6" y="239" width="4.1" height="2" fill="#000008"/><rect x="696.6" y="241" width="4.0" height="2" fill="#000009"/><rect x="696.6" y="243" width="3.9" height="2" fill="#000000"/><rect x="696.7" y="245" width="3.8" height="2" fill="#000000"/><rect x="697.2" y="219" width="2.8" height="2" fill="#84056c"/><rect x="697.2" y="221" width="2.7" height="2" fill="#ce6631"/><rect x="697.3" y="223" width="2.7" height="2" fill="#f39b1a"/><rect x="697.3" y="225" width="2.6" height="2" fill="#f6a913"/><rect x="697.3" y="227" width="2.5" height="2" fill="#fcc406"/><rect x="697.4" y="229" width="2.4" height="2" fill="#e37f27"/><rect x="697.4" y="231" width="2.4" height="2" fill="#bc4f3a"/><rect x="697.5" y="233" width="2.3" height="2" fill="#a5314b"/><rect x="697.5" y="235" width="2.2" height="2" fill="#650079"/><rect x="697.5" y="237" width="2.1" height="2" fill="#300081"/><rect x="697.6" y="239" width="2.1" height="2" fill="#110080"/><rect x="697.6" y="241" width="2.0" height="2" fill="#120080"/><rect x="697.6" y="243" width="1.9" height="2" fill="#000070"/><rect x="697.7" y="245" width="1.8" height="2" fill="#000079"/></g><rect x="3" y="3" width="311" height="45" fill="#fff"/><g font-family="Liberation Mono" font-size="11.67" fill="#000"><text x="4" y="15">Screen Capture Time: 2026-03-06 05:36:29 UTC</text><text x="4" y="29">143048050 Hz</text><text x="4" y="43">Config = V8</text></g><rect x="5" y="53" width="99" height="39" fill="#fff"/><rect x="5" y="53" width="99" height="15" fill="url(#cbar)"/><g fill="#000"><rect x="8" y="68" width="1" height="5"/><rect x="12" y="68" width="1" height="5"/><rect x="17" y="68" width="1" height="5"/><rect x="21" y="68" width="1" height="5"/><rect x="26" y="68" width="1" height="8"/><rect x="30" y="68" width="1" height="5"/><rect x="35" y="68" width="1" height="5"/><rect x="39" y="68" width="1" height="5"/><rect x="43" y="68" width="1" height="5"/><rect x="48" y="68" width="1" height="11"/><rect x="52" y="68" width="1" height="5"/><rect x="57" y="68" width="1" height="5"/><rect x="61" y="68" width="1" height="5"/><rect x="66" y="68" width="1" height="5"/><rect x="70" y="68" width="1" height="8"/><rect x="75" y="68" width="1" height="5"/><rect x="79" y="68" width="1" height="5"/><rect x="84" y="68" width="1" height="5"/><rect x="88" y="68" width="1" height="5"/><rect x="93" y="68" width="1" height="11"/><rect x="97" y="68" width="1" height="5"/><rect x="101" y="68" width="1" height="5"/></g><g font-family="Liberation Sans" font-size="10.75" fill="#000"><text x="5" y="90">-80 dB -60</text><text x="84.3" y="90">-40</text></g><g font-family="Liberation Sans" font-size="10.85" fill="#fff"><rect x="34" y="760" width="1" height="20" fill="#fff"/><text transform="translate(31,778) rotate(-90)" x="0" y="0">2026-03-06 05:35:10</text><rect x="148" y="760" width="1" height="20" fill="#fff"/><text transform="translate(145,778) rotate(-90)" x="0" y="0">2026-03-06 05:35:20</text><rect x="263" y="760" width="1" height="20" fill="#fff"/><text transform="translate(260,778) rotate(-90)" x="0" y="0">2026-03-06 05:35:30</text><rect x="377" y="760" width="1" height="20" fill="#fff"/><text transform="translate(374,778) rotate(-90)" x="0" y="0">2026-03-06 05:35:40</text><rect x="492" y="760" width="1" height="20" fill="#fff"/><text transform="translate(489,778) rotate(-90)" x="0" y="0">2026-03-06 05:35:50</text><rect x="606" y="760" width="1" height="20" fill="#fff"/><text transform="translate(603,778) rotate(-90)" x="0" y="0">2026-03-06 05:36:00</text><rect x="715" y="760" width="1" height="20" fill="#fff"/><text transform="translate(712,778) rotate(-90)" x="0" y="0">2026-03-06 05:36:10</text></g><g fill="#000"><rect x="818" y="4" width="8" height="1"/><rect x="818" y="12" width="8" height="1"/><rect x="818" y="20" width="8" height="1"/><rect x="818" y="28" width="11" height="1"/><rect x="818" y="36" width="8" height="1"/><rect x="818" y="43" width="8" height="1"/><rect x="818" y="51" width="8" height="1"/><rect x="818" y="59" width="8" height="1"/><rect x="818" y="67" width="8" height="1"/><rect x="818" y="75" width="8" height="1"/><rect x="818" y="82" width="8" height="1"/><rect x="818" y="90" width="8" height="1"/><rect x="818" y="98" width="8" height="1"/><rect x="818" y="106" width="26" height="1"/><rect x="818" y="114" width="8" height="1"/><rect x="818" y="121" width="8" height="1"/><rect x="818" y="129" width="8" height="1"/><rect x="818" y="137" width="8" height="1"/><rect x="818" y="145" width="8" height="1"/><rect x="818" y="153" width="8" height="1"/><rect x="818" y="160" width="8" height="1"/><rect x="818" y="168" width="8" height="1"/><rect x="818" y="176" width="8" height="1"/><rect x="818" y="184" width="11" height="1"/><rect x="818" y="192" width="8" height="1"/><rect x="818" y="200" width="8" height="1"/><rect x="818" y="207" width="8" height="1"/><rect x="818" y="215" width="8" height="1"/><rect x="818" y="223" width="8" height="1"/><rect x="818" y="231" width="8" height="1"/><rect x="818" y="239" width="8" height="1"/><rect x="818" y="246" width="8" height="1"/><rect x="818" y="254" width="8" height="1"/><rect x="818" y="262" width="26" height="1"/><rect x="818" y="270" width="8" height="1"/><rect x="818" y="278" width="8" height="1"/><rect x="818" y="285" width="8" height="1"/><rect x="818" y="293" width="8" height="1"/><rect x="818" y="301" width="8" height="1"/><rect x="818" y="309" width="8" height="1"/><rect x="818" y="317" width="8" height="1"/><rect x="818" y="324" width="8" height="1"/><rect x="818" y="332" width="8" height="1"/><rect x="818" y="340" width="11" height="1"/><rect x="818" y="348" width="8" height="1"/><rect x="818" y="356" width="8" height="1"/><rect x="818" y="363" width="8" height="1"/><rect x="818" y="371" width="8" height="1"/><rect x="818" y="379" width="8" height="1"/><rect x="818" y="387" width="8" height="1"/><rect x="818" y="395" width="8" height="1"/><rect x="818" y="403" width="8" height="1"/><rect x="818" y="410" width="8" height="1"/><rect x="818" y="418" width="26" height="1"/><rect x="818" y="426" width="8" height="1"/><rect x="818" y="434" width="8" height="1"/><rect x="818" y="442" width="8" height="1"/><rect x="818" y="449" width="8" height="1"/><rect x="818" y="457" width="8" height="1"/><rect x="818" y="465" width="8" height="1"/><rect x="818" y="473" width="8" height="1"/><rect x="818" y="481" width="8" height="1"/><rect x="818" y="488" width="8" height="1"/><rect x="818" y="496" width="11" height="1"/><rect x="818" y="504" width="8" height="1"/><rect x="818" y="512" width="8" height="1"/><rect x="818" y="520" width="8" height="1"/><rect x="818" y="527" width="8" height="1"/><rect x="818" y="535" width="8" height="1"/><rect x="818" y="543" width="8" height="1"/><rect x="818" y="551" width="8" height="1"/><rect x="818" y="559" width="8" height="1"/><rect x="818" y="566" width="8" height="1"/><rect x="818" y="574" width="26" height="1"/><rect x="818" y="582" width="8" height="1"/><rect x="818" y="590" width="8" height="1"/><rect x="818" y="598" width="8" height="1"/><rect x="818" y="606" width="8" height="1"/><rect x="818" y="613" width="8" height="1"/><rect x="818" y="621" width="8" height="1"/><rect x="818" y="629" width="8" height="1"/><rect x="818" y="637" width="8" height="1"/><rect x="818" y="645" width="8" height="1"/><rect x="818" y="652" width="11" height="1"/><rect x="818" y="660" width="8" height="1"/><rect x="818" y="668" width="8" height="1"/><rect x="818" y="676" width="8" height="1"/><rect x="818" y="684" width="8" height="1"/><rect x="818" y="691" width="8" height="1"/><rect x="818" y="699" width="8" height="1"/><rect x="818" y="707" width="8" height="1"/><rect x="818" y="715" width="8" height="1"/><rect x="818" y="723" width="8" height="1"/><rect x="818" y="730" width="26" height="1"/><rect x="818" y="738" width="8" height="1"/><rect x="818" y="746" width="8" height="1"/><rect x="818" y="754" width="8" height="1"/><rect x="818" y="762" width="8" height="1"/><rect x="818" y="769" width="8" height="1"/><rect x="818" y="777" width="8" height="1"/></g><rect x="839" y="10" width="1" height="760" fill="#14148e"/><polyline points="823,4.5 825,5 839.5,13.5" fill="none" stroke="#14148e" stroke-width="1.1"/><polyline points="839.5,769.5 826.5,777.5 822.5,779.5" fill="none" stroke="#14148e" stroke-width="1.1"/><g font-family="Liberation Mono" font-size="11.67" fill="#4a4a4a"><text transform="translate(849.2,75.5) rotate(90)">143050400</text><text transform="translate(849.2,231.7) rotate(90)">143050200</text><text transform="translate(849.2,387.8) rotate(90)">143050000</text><text transform="translate(849.2,544.0) rotate(90)">143049800</text><text transform="translate(849.2,689.1) rotate(90)">143049600 Hz</text></g><rect x="860" y="1" width="80" height="781" fill="#000"/><rect x="860" y="9" width="80" height="765" fill="#555"/><g><rect x="860" y="17" width="8" height="1" fill="#000"/><rect x="860" y="18" width="7" height="1" fill="#000"/><rect x="860" y="19" width="10" height="1" fill="#000"/><rect x="860" y="20" width="10" height="1" fill="#000"/><rect x="860" y="21" width="24" height="1" fill="#07073c"/><rect x="860" y="21" width="11" height="1" fill="#000"/><rect x="860" y="22" width="21" height="1" fill="#07073c"/><rect x="860" y="22" width="12" height="1" fill="#000"/><rect x="860" y="23" width="21" height="1" fill="#07073c"/><rect x="860" y="23" width="10" height="1" fill="#000"/><rect x="860" y="24" width="20" height="1" fill="#07073c"/><rect x="860" y="24" width="9" height="1" fill="#000"/><rect x="860" y="25" width="14" height="1" fill="#000"/><rect x="860" y="26" width="13" height="1" fill="#000"/><rect x="860" y="27" width="7" height="1" fill="#000"/><rect x="860" y="28" width="9" height="1" fill="#000"/><rect x="860" y="29" width="4" height="1" fill="#000"/><rect x="860" y="30" width="1" height="1" fill="#000"/><rect x="860" y="32" width="19" height="1" fill="#07073c"/><rect x="860" y="32" width="5" height="1" fill="#000"/><rect x="860" y="33" width="23" height="1" fill="#07073c"/><rect x="860" y="33" width="1" height="1" fill="#000"/><rect x="860" y="34" width="7" height="1" fill="#000"/><rect x="860" y="35" width="4" height="1" fill="#000"/><rect x="860" y="36" width="13" height="1" fill="#000"/><rect x="860" y="37" width="10" height="1" fill="#000"/><rect x="860" y="38" width="10" height="1" fill="#000"/><rect x="860" y="41" width="6" height="1" fill="#000"/><rect x="860" y="42" width="6" height="1" fill="#000"/><rect x="860" y="43" width="12" height="1" fill="#000"/><rect x="860" y="44" width="14" height="1" fill="#07073c"/><rect x="860" y="44" width="5" height="1" fill="#000"/><rect x="860" y="45" width="14" height="1" fill="#07073c"/><rect x="860" y="45" width="5" height="1" fill="#000"/><rect x="860" y="46" width="3" height="1" fill="#000"/><rect x="860" y="47" width="6" height="1" fill="#000"/><rect x="860" y="48" width="16" height="1" fill="#000"/><rect x="860" y="49" width="3" height="1" fill="#000"/><rect x="860" y="50" width="6" height="1" fill="#000"/><rect x="860" y="51" width="6" height="1" fill="#000"/><rect x="860" y="52" width="6" height="1" fill="#000"/><rect x="860" y="53" width="11" height="1" fill="#000"/><rect x="860" y="54" width="5" height="1" fill="#000"/><rect x="860" y="55" width="7" height="1" fill="#000"/><rect x="860" y="56" width="15" height="1" fill="#000"/><rect x="860" y="57" width="12" height="1" fill="#000"/><rect x="860" y="58" width="19" height="1" fill="#000"/><rect x="860" y="59" width="17" height="1" fill="#000"/><rect x="860" y="60" width="7" height="1" fill="#000"/><rect x="860" y="61" width="7" height="1" fill="#000"/><rect x="860" y="62" width="10" height="1" fill="#000"/><rect x="860" y="63" width="8" height="1" fill="#000"/><rect x="860" y="64" width="13" height="1" fill="#000"/><rect x="860" y="65" width="8" height="1" fill="#000"/><rect x="860" y="66" width="13" height="1" fill="#000"/><rect x="860" y="67" width="16" height="1" fill="#000"/><rect x="860" y="68" width="13" height="1" fill="#000"/><rect x="860" y="69" width="19" height="1" fill="#000"/><rect x="860" y="70" width="19" height="1" fill="#000"/><rect x="860" y="71" width="16" height="1" fill="#000"/><rect x="860" y="72" width="10" height="1" fill="#000"/><rect x="860" y="73" width="5" height="1" fill="#000"/><rect x="860" y="74" width="8" height="1" fill="#000"/><rect x="860" y="76" width="6" height="1" fill="#000"/><rect x="860" y="77" width="5" height="1" fill="#000"/><rect x="860" y="78" width="1" height="1" fill="#000"/><rect x="860" y="79" width="6" height="1" fill="#000"/><rect x="860" y="80" width="12" height="1" fill="#000"/><rect x="860" y="81" width="11" height="1" fill="#000"/><rect x="860" y="82" width="15" height="1" fill="#07073c"/><rect x="860" y="82" width="2" height="1" fill="#000"/><rect x="860" y="83" width="17" height="1" fill="#07073c"/><rect x="860" y="83" width="0" height="1" fill="#000"/><rect x="860" y="84" width="14" height="1" fill="#07073c"/><rect x="860" y="84" width="1" height="1" fill="#000"/><rect x="860" y="85" width="3" height="1" fill="#000"/><rect x="860" y="86" width="7" height="1" fill="#000"/><rect x="860" y="87" width="10" height="1" fill="#000"/><rect x="860" y="88" width="7" height="1" fill="#000"/><rect x="860" y="89" width="7" height="1" fill="#000"/><rect x="860" y="90" width="12" height="1" fill="#000"/><rect x="860" y="91" width="4" height="1" fill="#000"/><rect x="860" y="92" width="5" height="1" fill="#000"/><rect x="860" y="93" width="5" height="1" fill="#000"/><rect x="860" y="94" width="1" height="1" fill="#000"/><rect x="860" y="99" width="2" height="1" fill="#000"/><rect x="860" y="102" width="1" height="1" fill="#000"/><rect x="860" y="103" width="1" height="1" fill="#000"/><rect x="860" y="104" width="3" height="1" fill="#000"/><rect x="860" y="105" width="11" height="1" fill="#000"/><rect x="860" y="106" width="9" height="1" fill="#000"/><rect x="860" y="107" width="11" height="1" fill="#000"/><rect x="860" y="108" width="11" height="1" fill="#000"/><rect x="860" y="109" width="12" height="1" fill="#000"/><rect x="860" y="110" width="10" height="1" fill="#000"/><rect x="860" y="111" width="12" height="1" fill="#000"/><rect x="860" y="112" width="14" height="1" fill="#000"/><rect x="860" y="113" width="10" height="1" fill="#000"/><rect x="860" y="114" width="8" height="1" fill="#000"/><rect x="860" y="115" width="17" height="1" fill="#000"/><rect x="860" y="116" width="11" height="1" fill="#000"/><rect x="860" y="117" width="16" height="1" fill="#000"/><rect x="860" y="118" width="18" height="1" fill="#000"/><rect x="860" y="119" width="13" height="1" fill="#000"/><rect x="860" y="120" width="12" height="1" fill="#000"/><rect x="860" y="122" width="3" height="1" fill="#000"/><rect x="860" y="123" width="9" height="1" fill="#000"/><rect x="860" y="124" width="4" height="1" fill="#000"/><rect x="860" y="125" width="6" height="1" fill="#000"/><rect x="860" y="126" width="7" height="1" fill="#000"/><rect x="860" y="127" width="4" height="1" fill="#000"/><rect x="860" y="130" width="16" height="1" fill="#07073c"/><rect x="860" y="130" width="0" height="1" fill="#000"/><rect x="860" y="131" width="14" height="1" fill="#07073c"/><rect x="860" y="131" width="0" height="1" fill="#000"/><rect x="860" y="132" width="15" height="1" fill="#07073c"/><rect x="860" y="132" width="0" height="1" fill="#000"/><rect x="860" y="133" width="16" height="1" fill="#07073c"/><rect x="860" y="133" width="4" height="1" fill="#000"/><rect x="860" y="134" width="13" height="1" fill="#000"/><rect x="860" y="135" width="7" height="1" fill="#000"/><rect x="860" y="136" width="11" height="1" fill="#000"/><rect x="860" y="137" width="8" height="1" fill="#000"/><rect x="860" y="138" width="7" height="1" fill="#000"/><rect x="860" y="139" width="10" height="1" fill="#000"/><rect x="860" y="140" width="10" height="1" fill="#000"/><rect x="860" y="141" width="11" height="1" fill="#000"/><rect x="860" y="142" width="8" height="1" fill="#000"/><rect x="860" y="143" width="9" height="1" fill="#000"/><rect x="860" y="144" width="13" height="1" fill="#000"/><rect x="860" y="145" width="15" height="1" fill="#000"/><rect x="860" y="146" width="15" height="1" fill="#000"/><rect x="860" y="147" width="6" height="1" fill="#000"/><rect x="860" y="148" width="6" height="1" fill="#000"/><rect x="860" y="149" width="7" height="1" fill="#000"/><rect x="860" y="150" width="12" height="1" fill="#000"/><rect x="860" y="151" width="12" height="1" fill="#000"/><rect x="860" y="152" width="9" height="1" fill="#000"/><rect x="860" y="153" width="3" height="1" fill="#000"/><rect x="860" y="154" width="18" height="1" fill="#07073c"/><rect x="860" y="154" width="6" height="1" fill="#000"/><rect x="860" y="155" width="20" height="1" fill="#07073c"/><rect x="860" y="155" width="7" height="1" fill="#000"/><rect x="860" y="156" width="6" height="1" fill="#000"/><rect x="860" y="157" width="14" height="1" fill="#07073c"/><rect x="860" y="157" width="6" height="1" fill="#000"/><rect x="860" y="158" width="16" height="1" fill="#07073c"/><rect x="860" y="158" width="1" height="1" fill="#000"/><rect x="860" y="159" width="13" height="1" fill="#07073c"/><rect x="860" y="159" width="7" height="1" fill="#000"/><rect x="860" y="160" width="15" height="1" fill="#07073c"/><rect x="860" y="160" width="9" height="1" fill="#000"/><rect x="860" y="161" width="11" height="1" fill="#000"/><rect x="860" y="162" width="7" height="1" fill="#000"/><rect x="860" y="163" width="16" height="1" fill="#000"/><rect x="860" y="164" width="12" height="1" fill="#000"/><rect x="860" y="165" width="7" height="1" fill="#000"/><rect x="860" y="166" width="7" height="1" fill="#000"/><rect x="860" y="167" width="15" height="1" fill="#000"/><rect x="860" y="168" width="5" height="1" fill="#000"/><rect x="860" y="170" width="3" height="1" fill="#000"/><rect x="860" y="171" width="3" height="1" fill="#000"/><rect x="860" y="172" width="1" height="1" fill="#000"/><rect x="860" y="173" width="1" height="1" fill="#000"/><rect x="860" y="176" width="4" height="1" fill="#000"/><rect x="860" y="177" width="9" height="1" fill="#000"/><rect x="860" y="178" width="8" height="1" fill="#000"/><rect x="860" y="180" width="11" height="1" fill="#000"/><rect x="860" y="181" width="16" height="1" fill="#000"/><rect x="860" y="182" width="17" height="1" fill="#07073c"/><rect x="860" y="182" width="8" height="1" fill="#000"/><rect x="860" y="183" width="20" height="1" fill="#07073c"/><rect x="860" y="183" width="6" height="1" fill="#000"/><rect x="860" y="184" width="14" height="1" fill="#000"/><rect x="860" y="185" width="13" height="1" fill="#000"/><rect x="860" y="186" width="11" height="1" fill="#000"/><rect x="860" y="187" width="17" height="1" fill="#000"/><rect x="860" y="188" width="15" height="1" fill="#000"/><rect x="860" y="189" width="6" height="1" fill="#000"/><rect x="860" y="190" width="4" height="1" fill="#000"/><rect x="860" y="191" width="5" height="1" fill="#000"/><rect x="860" y="192" width="13" height="1" fill="#000"/><rect x="860" y="193" width="12" height="1" fill="#000"/><rect x="860" y="194" width="10" height="1" fill="#000"/><rect x="860" y="195" width="7" height="1" fill="#000"/><rect x="860" y="196" width="8" height="1" fill="#000"/><rect x="860" y="197" width="3" height="1" fill="#000"/><rect x="860" y="198" width="10" height="1" fill="#000"/><rect x="860" y="199" width="15" height="1" fill="#000"/><rect x="860" y="200" width="10" height="1" fill="#000"/><rect x="860" y="201" width="8" height="1" fill="#000"/><rect x="860" y="202" width="14" height="1" fill="#000"/><rect x="860" y="203" width="12" height="1" fill="#000"/><rect x="860" y="204" width="13" height="1" fill="#000"/><rect x="860" y="205" width="8" height="1" fill="#000"/><rect x="860" y="206" width="7" height="1" fill="#000"/><rect x="860" y="207" width="5" height="1" fill="#000"/><rect x="860" y="208" width="7" height="1" fill="#000"/><rect x="860" y="209" width="11" height="1" fill="#000"/><rect x="860" y="210" width="9" height="1" fill="#000"/><rect x="860" y="211" width="11" height="1" fill="#000"/><rect x="860" y="212" width="12" height="1" fill="#000"/><rect x="860" y="213" width="5" height="1" fill="#000"/><rect x="860" y="214" width="16" height="1" fill="#07073c"/><rect x="860" y="214" width="0" height="1" fill="#000"/><rect x="860" y="215" width="19" height="1" fill="#07073c"/><rect x="860" y="215" width="6" height="1" fill="#000"/><rect x="860" y="216" width="11" height="1" fill="#000"/><rect x="860" y="217" width="14" height="1" fill="#000"/><rect x="860" y="218" width="12" height="1" fill="#000"/><rect x="860" y="219" width="17" height="1" fill="#000"/><rect x="860" y="220" width="8" height="1" fill="#000"/><rect x="860" y="221" width="11" height="1" fill="#000"/><rect x="860" y="222" width="5" height="1" fill="#000"/><rect x="860" y="223" width="6" height="1" fill="#000"/><rect x="860" y="225" width="4" height="1" fill="#000"/><rect x="860" y="226" width="7" height="1" fill="#000"/><rect x="860" y="227" width="5" height="1" fill="#000"/><rect x="860" y="228" width="3" height="1" fill="#000"/><rect x="860" y="229" width="4" height="1" fill="#000"/><rect x="860" y="231" width="4" height="1" fill="#000"/><rect x="860" y="232" width="8" height="1" fill="#000"/><rect x="860" y="233" width="12" height="1" fill="#000"/><rect x="860" y="234" width="6" height="1" fill="#000"/><rect x="860" y="235" width="13" height="1" fill="#000"/><rect x="860" y="236" width="9" height="1" fill="#000"/><rect x="860" y="237" width="5" height="1" fill="#000"/><rect x="860" y="238" width="12" height="1" fill="#000"/><rect x="860" y="239" width="10" height="1" fill="#000"/><rect x="860" y="240" width="10" height="1" fill="#000"/><rect x="860" y="241" width="12" height="1" fill="#000"/><rect x="860" y="242" width="15" height="1" fill="#000"/><rect x="860" y="243" width="12" height="1" fill="#000"/><rect x="860" y="244" width="7" height="1" fill="#000"/><rect x="860" y="245" width="6" height="1" fill="#000"/><rect x="860" y="248" width="2" height="1" fill="#000"/><rect x="860" y="249" width="4" height="1" fill="#000"/><rect x="860" y="250" width="5" height="1" fill="#000"/><rect x="860" y="251" width="8" height="1" fill="#000"/><rect x="860" y="252" width="3" height="1" fill="#000"/><rect x="860" y="253" width="9" height="1" fill="#000"/><rect x="860" y="254" width="6" height="1" fill="#000"/><rect x="860" y="255" width="1" height="1" fill="#000"/><rect x="860" y="257" width="2" height="1" fill="#000"/><rect x="860" y="260" width="6" height="1" fill="#000"/><rect x="860" y="261" width="6" height="1" fill="#000"/><rect x="860" y="262" width="7" height="1" fill="#000"/><rect x="860" y="263" width="7" height="1" fill="#000"/><rect x="860" y="264" width="8" height="1" fill="#000"/><rect x="860" y="265" width="5" height="1" fill="#000"/><rect x="860" y="266" width="4" height="1" fill="#000"/><rect x="860" y="267" width="8" height="1" fill="#000"/><rect x="860" y="268" width="9" height="1" fill="#000"/><rect x="860" y="269" width="13" height="1" fill="#000"/><rect x="860" y="270" width="10" height="1" fill="#000"/><rect x="860" y="271" width="20" height="1" fill="#000"/><rect x="860" y="272" width="18" height="1" fill="#000"/><rect x="860" y="273" width="15" height="1" fill="#000"/><rect x="860" y="274" width="20" height="1" fill="#000"/><rect x="860" y="275" width="16" height="1" fill="#000"/><rect x="860" y="276" width="16" height="1" fill="#000"/><rect x="860" y="277" width="17" height="1" fill="#000"/><rect x="860" y="278" width="16" height="1" fill="#000"/><rect x="860" y="279" width="11" height="1" fill="#000"/><rect x="860" y="280" width="13" height="1" fill="#000"/><rect x="860" y="281" width="15" height="1" fill="#000"/><rect x="860" y="282" width="12" height="1" fill="#000"/><rect x="860" y="283" width="9" height="1" fill="#000"/><rect x="860" y="284" width="10" height="1" fill="#000"/><rect x="860" y="285" width="11" height="1" fill="#000"/><rect x="860" y="286" width="7" height="1" fill="#000"/><rect x="860" y="288" width="1" height="1" fill="#000"/><rect x="860" y="289" width="7" height="1" fill="#000"/><rect x="860" y="290" width="8" height="1" fill="#000"/><rect x="860" y="291" width="12" height="1" fill="#000"/><rect x="860" y="292" width="16" height="1" fill="#000"/><rect x="860" y="293" width="17" height="1" fill="#000"/><rect x="860" y="294" width="14" height="1" fill="#000"/><rect x="860" y="295" width="22" height="1" fill="#000"/><rect x="860" y="296" width="21" height="1" fill="#000"/><rect x="860" y="297" width="13" height="1" fill="#000"/><rect x="860" y="298" width="15" height="1" fill="#000"/><rect x="860" y="299" width="15" height="1" fill="#000"/><rect x="860" y="300" width="18" height="1" fill="#000"/><rect x="860" y="301" width="15" height="1" fill="#000"/><rect x="860" y="302" width="6" height="1" fill="#000"/><rect x="860" y="303" width="4" height="1" fill="#000"/><rect x="860" y="304" width="4" height="1" fill="#000"/><rect x="860" y="305" width="4" height="1" fill="#000"/><rect x="860" y="306" width="20" height="1" fill="#07073c"/><rect x="860" y="306" width="4" height="1" fill="#000"/><rect x="860" y="307" width="22" height="1" fill="#07073c"/><rect x="860" y="307" width="6" height="1" fill="#000"/><rect x="860" y="308" width="23" height="1" fill="#07073c"/><rect x="860" y="308" width="8" height="1" fill="#000"/><rect x="860" y="309" width="24" height="1" fill="#07073c"/><rect x="860" y="309" width="5" height="1" fill="#000"/><rect x="860" y="310" width="3" height="1" fill="#000"/><rect x="860" y="311" width="1" height="1" fill="#000"/><rect x="860" y="312" width="4" height="1" fill="#000"/><rect x="860" y="313" width="5" height="1" fill="#000"/><rect x="860" y="314" width="12" height="1" fill="#000"/><rect x="860" y="315" width="5" height="1" fill="#000"/><rect x="860" y="316" width="7" height="1" fill="#000"/><rect x="860" y="317" width="14" height="1" fill="#000"/><rect x="860" y="318" width="21" height="1" fill="#000"/><rect x="860" y="319" width="22" height="1" fill="#000"/><rect x="860" y="320" width="18" height="1" fill="#000"/><rect x="860" y="321" width="17" height="1" fill="#000"/><rect x="860" y="322" width="17" height="1" fill="#000"/><rect x="860" y="323" width="13" height="1" fill="#000"/><rect x="860" y="324" width="6" height="1" fill="#000"/><rect x="860" y="325" width="15" height="1" fill="#000"/><rect x="860" y="326" width="14" height="1" fill="#000"/><rect x="860" y="327" width="19" height="1" fill="#000"/><rect x="860" y="328" width="16" height="1" fill="#000"/><rect x="860" y="329" width="9" height="1" fill="#000"/><rect x="860" y="330" width="7" height="1" fill="#000"/><rect x="860" y="331" width="10" height="1" fill="#000"/><rect x="860" y="332" width="11" height="1" fill="#000"/><rect x="860" y="333" width="2" height="1" fill="#000"/><rect x="860" y="335" width="5" height="1" fill="#000"/><rect x="860" y="336" width="8" height="1" fill="#000"/><rect x="860" y="337" width="17" height="1" fill="#000"/><rect x="860" y="338" width="15" height="1" fill="#000"/><rect x="860" y="339" width="19" height="1" fill="#000"/><rect x="860" y="340" width="17" height="1" fill="#000"/><rect x="860" y="341" width="13" height="1" fill="#000"/><rect x="860" y="342" width="20" height="1" fill="#000"/><rect x="860" y="343" width="21" height="1" fill="#000"/><rect x="860" y="344" width="17" height="1" fill="#000"/><rect x="860" y="345" width="21" height="1" fill="#000"/><rect x="860" y="346" width="19" height="1" fill="#000"/><rect x="860" y="347" width="17" height="1" fill="#000"/><rect x="860" y="348" width="16" height="1" fill="#000"/><rect x="860" y="349" width="19" height="1" fill="#000"/><rect x="860" y="350" width="19" height="1" fill="#000"/><rect x="860" y="351" width="16" height="1" fill="#000"/><rect x="860" y="352" width="14" height="1" fill="#000"/><rect x="860" y="353" width="13" height="1" fill="#000"/><rect x="860" y="354" width="7" height="1" fill="#000"/><rect x="860" y="355" width="4" height="1" fill="#000"/><rect x="860" y="356" width="6" height="1" fill="#000"/><rect x="860" y="357" width="4" height="1" fill="#000"/><rect x="860" y="358" width="1" height="1" fill="#000"/><rect x="860" y="359" width="2" height="1" fill="#000"/><rect x="860" y="360" width="7" height="1" fill="#000"/><rect x="860" y="361" width="4" height="1" fill="#000"/><rect x="860" y="362" width="7" height="1" fill="#000"/><rect x="860" y="363" width="9" height="1" fill="#000"/><rect x="860" y="364" width="21" height="1" fill="#07073c"/><rect x="860" y="364" width="2" height="1" fill="#000"/><rect x="860" y="365" width="25" height="1" fill="#07073c"/><rect x="860" y="365" width="3" height="1" fill="#000"/><rect x="860" y="366" width="22" height="1" fill="#07073c"/><rect x="860" y="366" width="1" height="1" fill="#000"/><rect x="860" y="367" width="5" height="1" fill="#000"/><rect x="860" y="368" width="17" height="1" fill="#000"/><rect x="860" y="369" width="21" height="1" fill="#000"/><rect x="860" y="370" width="14" height="1" fill="#000"/><rect x="860" y="371" width="8" height="1" fill="#000"/><rect x="860" y="372" width="12" height="1" fill="#000"/><rect x="860" y="373" width="12" height="1" fill="#000"/><rect x="860" y="374" width="12" height="1" fill="#000"/><rect x="860" y="375" width="13" height="1" fill="#000"/><rect x="860" y="376" width="13" height="1" fill="#000"/><rect x="860" y="377" width="6" height="1" fill="#000"/><rect x="860" y="378" width="14" height="1" fill="#000"/><rect x="860" y="379" width="12" height="1" fill="#000"/><rect x="860" y="380" width="9" height="1" fill="#000"/><rect x="860" y="381" width="15" height="1" fill="#000"/><rect x="860" y="382" width="12" height="1" fill="#000"/><rect x="860" y="383" width="23" height="1" fill="#07073c"/><rect x="860" y="383" width="11" height="1" fill="#000"/><rect x="860" y="384" width="25" height="1" fill="#07073c"/><rect x="860" y="384" width="10" height="1" fill="#000"/><rect x="860" y="385" width="25" height="1" fill="#07073c"/><rect x="860" y="385" width="12" height="1" fill="#000"/><rect x="860" y="386" width="22" height="1" fill="#07073c"/><rect x="860" y="386" width="9" height="1" fill="#000"/><rect x="860" y="387" width="19" height="1" fill="#000"/><rect x="860" y="388" width="19" height="1" fill="#000"/><rect x="860" y="389" width="11" height="1" fill="#000"/><rect x="860" y="390" width="8" height="1" fill="#000"/><rect x="860" y="391" width="7" height="1" fill="#000"/><rect x="860" y="392" width="4" height="1" fill="#000"/><rect x="860" y="393" width="8" height="1" fill="#000"/><rect x="860" y="394" width="20" height="1" fill="#07073c"/><rect x="860" y="394" width="5" height="1" fill="#000"/><rect x="860" y="395" width="21" height="1" fill="#07073c"/><rect x="860" y="395" width="4" height="1" fill="#000"/><rect x="860" y="396" width="20" height="1" fill="#07073c"/><rect x="860" y="396" width="4" height="1" fill="#000"/><rect x="860" y="397" width="22" height="1" fill="#07073c"/><rect x="860" y="397" width="7" height="1" fill="#000"/><rect x="860" y="398" width="8" height="1" fill="#000"/><rect x="860" y="399" width="23" height="1" fill="#07073c"/><rect x="860" y="399" width="4" height="1" fill="#000"/><rect x="860" y="400" width="23" height="1" fill="#07073c"/><rect x="860" y="400" width="7" height="1" fill="#000"/><rect x="860" y="401" width="21" height="1" fill="#07073c"/><rect x="860" y="401" width="3" height="1" fill="#000"/><rect x="860" y="402" width="4" height="1" fill="#000"/><rect x="860" y="403" width="4" height="1" fill="#000"/><rect x="860" y="404" width="1" height="1" fill="#000"/><rect x="860" y="407" width="20" height="1" fill="#07073c"/><rect x="860" y="407" width="1" height="1" fill="#000"/><rect x="860" y="408" width="21" height="1" fill="#07073c"/><rect x="860" y="408" width="0" height="1" fill="#000"/><rect x="860" y="409" width="25" height="1" fill="#07073c"/><rect x="860" y="409" width="0" height="1" fill="#000"/><rect x="860" y="410" width="24" height="1" fill="#07073c"/><rect x="860" y="410" width="2" height="1" fill="#000"/><rect x="860" y="411" width="5" height="1" fill="#000"/><rect x="860" y="412" width="8" height="1" fill="#000"/><rect x="860" y="413" width="10" height="1" fill="#000"/><rect x="860" y="414" width="7" height="1" fill="#000"/><rect x="860" y="415" width="8" height="1" fill="#000"/><rect x="860" y="416" width="10" height="1" fill="#000"/><rect x="860" y="417" width="10" height="1" fill="#000"/><rect x="860" y="418" width="7" height="1" fill="#000"/><rect x="860" y="419" width="7" height="1" fill="#000"/><rect x="860" y="420" width="10" height="1" fill="#000"/><rect x="860" y="421" width="11" height="1" fill="#000"/><rect x="860" y="422" width="19" height="1" fill="#000"/><rect x="860" y="423" width="16" height="1" fill="#07073c"/><rect x="860" y="423" width="8" height="1" fill="#000"/><rect x="860" y="424" width="15" height="1" fill="#07073c"/><rect x="860" y="424" width="5" height="1" fill="#000"/><rect x="860" y="425" width="18" height="1" fill="#07073c"/><rect x="860" y="425" width="8" height="1" fill="#000"/><rect x="860" y="426" width="12" height="1" fill="#000"/><rect x="860" y="427" width="16" height="1" fill="#000"/><rect x="860" y="428" width="22" height="1" fill="#000"/><rect x="860" y="429" width="21" height="1" fill="#000"/><rect x="860" y="430" width="21" height="1" fill="#000"/><rect x="860" y="431" width="13" height="1" fill="#000"/><rect x="860" y="432" width="16" height="1" fill="#07073c"/><rect x="860" y="432" width="5" height="1" fill="#000"/><rect x="860" y="433" width="19" height="1" fill="#07073c"/><rect x="860" y="433" width="6" height="1" fill="#000"/><rect x="860" y="434" width="14" height="1" fill="#000"/><rect x="860" y="435" width="10" height="1" fill="#000"/><rect x="860" y="436" width="16" height="1" fill="#000"/><rect x="860" y="437" width="11" height="1" fill="#000"/><rect x="860" y="438" width="8" height="1" fill="#000"/><rect x="860" y="439" width="11" height="1" fill="#000"/><rect x="860" y="440" width="17" height="1" fill="#07073c"/><rect x="860" y="440" width="4" height="1" fill="#000"/><rect x="860" y="441" width="18" height="1" fill="#07073c"/><rect x="860" y="441" width="6" height="1" fill="#000"/><rect x="860" y="442" width="19" height="1" fill="#07073c"/><rect x="860" y="442" width="5" height="1" fill="#000"/><rect x="860" y="443" width="10" height="1" fill="#000"/><rect x="860" y="444" width="5" height="1" fill="#000"/><rect x="860" y="445" width="11" height="1" fill="#000"/><rect x="860" y="446" width="11" height="1" fill="#000"/><rect x="860" y="447" width="10" height="1" fill="#000"/><rect x="860" y="448" width="7" height="1" fill="#000"/><rect x="860" y="449" width="6" height="1" fill="#000"/><rect x="860" y="450" width="3" height="1" fill="#000"/><rect x="860" y="451" width="10" height="1" fill="#000"/><rect x="860" y="452" width="5" height="1" fill="#000"/><rect x="860" y="453" width="11" height="1" fill="#000"/><rect x="860" y="454" width="23" height="1" fill="#07073c"/><rect x="860" y="454" width="2" height="1" fill="#000"/><rect x="860" y="455" width="22" height="1" fill="#07073c"/><rect x="860" y="455" width="3" height="1" fill="#000"/><rect x="860" y="456" width="25" height="1" fill="#07073c"/><rect x="860" y="456" width="8" height="1" fill="#000"/><rect x="860" y="457" width="12" height="1" fill="#000"/><rect x="860" y="458" width="13" height="1" fill="#000"/><rect x="860" y="459" width="7" height="1" fill="#000"/><rect x="860" y="460" width="13" height="1" fill="#000"/><rect x="860" y="461" width="8" height="1" fill="#000"/><rect x="860" y="462" width="8" height="1" fill="#000"/><rect x="860" y="463" width="9" height="1" fill="#000"/><rect x="860" y="464" width="12" height="1" fill="#000"/><rect x="860" y="465" width="14" height="1" fill="#000"/><rect x="860" y="466" width="13" height="1" fill="#000"/><rect x="860" y="467" width="8" height="1" fill="#000"/><rect x="860" y="468" width="9" height="1" fill="#000"/><rect x="860" y="469" width="1" height="1" fill="#000"/><rect x="860" y="470" width="12" height="1" fill="#000"/><rect x="860" y="471" width="14" height="1" fill="#000"/><rect x="860" y="472" width="13" height="1" fill="#000"/><rect x="860" y="473" width="12" height="1" fill="#000"/><rect x="860" y="474" width="10" height="1" fill="#000"/><rect x="860" y="475" width="10" height="1" fill="#000"/><rect x="860" y="476" width="21" height="1" fill="#07073c"/><rect x="860" y="476" width="5" height="1" fill="#000"/><rect x="860" y="477" width="19" height="1" fill="#07073c"/><rect x="860" y="477" width="9" height="1" fill="#000"/><rect x="860" y="478" width="22" height="1" fill="#07073c"/><rect x="860" y="478" width="4" height="1" fill="#000"/><rect x="860" y="479" width="20" height="1" fill="#07073c"/><rect x="860" y="479" width="7" height="1" fill="#000"/><rect x="860" y="480" width="21" height="1" fill="#07073c"/><rect x="860" y="480" width="4" height="1" fill="#000"/><rect x="860" y="481" width="6" height="1" fill="#000"/><rect x="860" y="482" width="11" height="1" fill="#000"/><rect x="860" y="483" width="11" height="1" fill="#000"/><rect x="860" y="484" width="1" height="1" fill="#000"/><rect x="860" y="485" width="15" height="1" fill="#07073c"/><rect x="860" y="485" width="1" height="1" fill="#000"/><rect x="860" y="486" width="17" height="1" fill="#07073c"/><rect x="860" y="486" width="1" height="1" fill="#000"/><rect x="860" y="488" width="10" height="1" fill="#000"/><rect x="860" y="489" width="9" height="1" fill="#000"/><rect x="860" y="490" width="11" height="1" fill="#000"/><rect x="860" y="491" width="23" height="1" fill="#07073c"/><rect x="860" y="491" width="7" height="1" fill="#000"/><rect x="860" y="492" width="21" height="1" fill="#07073c"/><rect x="860" y="492" width="3" height="1" fill="#000"/><rect x="860" y="493" width="21" height="1" fill="#07073c"/><rect x="860" y="493" width="4" height="1" fill="#000"/><rect x="860" y="494" width="21" height="1" fill="#07073c"/><rect x="860" y="494" width="1" height="1" fill="#000"/><rect x="860" y="495" width="1" height="1" fill="#000"/><rect x="860" y="496" width="6" height="1" fill="#000"/><rect x="860" y="497" width="16" height="1" fill="#07073c"/><rect x="860" y="497" width="1" height="1" fill="#000"/><rect x="860" y="498" width="14" height="1" fill="#07073c"/><rect x="860" y="498" width="2" height="1" fill="#000"/><rect x="860" y="499" width="8" height="1" fill="#000"/><rect x="860" y="500" width="9" height="1" fill="#000"/><rect x="860" y="501" width="10" height="1" fill="#000"/><rect x="860" y="502" width="12" height="1" fill="#000"/><rect x="860" y="503" width="8" height="1" fill="#000"/><rect x="860" y="504" width="10" height="1" fill="#000"/><rect x="860" y="505" width="3" height="1" fill="#000"/><rect x="860" y="507" width="23" height="1" fill="#07073c"/><rect x="860" y="507" width="5" height="1" fill="#000"/><rect x="860" y="508" width="3" height="1" fill="#000"/><rect x="860" y="509" width="5" height="1" fill="#000"/><rect x="860" y="510" width="14" height="1" fill="#07073c"/><rect x="860" y="510" width="7" height="1" fill="#000"/><rect x="860" y="511" width="13" height="1" fill="#07073c"/><rect x="860" y="511" width="8" height="1" fill="#000"/><rect x="860" y="512" width="15" height="1" fill="#07073c"/><rect x="860" y="512" width="4" height="1" fill="#000"/><rect x="860" y="513" width="4" height="1" fill="#000"/><rect x="860" y="516" width="9" height="1" fill="#000"/><rect x="860" y="517" width="9" height="1" fill="#000"/><rect x="860" y="518" width="12" height="1" fill="#000"/><rect x="860" y="519" width="8" height="1" fill="#000"/><rect x="860" y="520" width="16" height="1" fill="#000"/><rect x="860" y="521" width="16" height="1" fill="#000"/><rect x="860" y="522" width="18" height="1" fill="#000"/><rect x="860" y="523" width="16" height="1" fill="#07073c"/><rect x="860" y="523" width="11" height="1" fill="#000"/><rect x="860" y="524" width="19" height="1" fill="#000"/><rect x="860" y="525" width="17" height="1" fill="#000"/><rect x="860" y="526" width="20" height="1" fill="#000"/><rect x="860" y="527" width="9" height="1" fill="#000"/><rect x="860" y="528" width="15" height="1" fill="#000"/><rect x="860" y="529" width="15" height="1" fill="#000"/><rect x="860" y="530" width="14" height="1" fill="#000"/><rect x="860" y="531" width="17" height="1" fill="#000"/><rect x="860" y="532" width="15" height="1" fill="#000"/><rect x="860" y="533" width="10" height="1" fill="#000"/><rect x="860" y="534" width="3" height="1" fill="#000"/><rect x="860" y="535" width="11" height="1" fill="#000"/><rect x="860" y="536" width="15" height="1" fill="#000"/><rect x="860" y="537" width="11" height="1" fill="#000"/><rect x="860" y="538" width="18" height="1" fill="#07073c"/><rect x="860" y="538" width="7" height="1" fill="#000"/><rect x="860" y="539" width="18" height="1" fill="#07073c"/><rect x="860" y="539" width="1" height="1" fill="#000"/><rect x="860" y="540" width="19" height="1" fill="#07073c"/><rect x="860" y="540" width="2" height="1" fill="#000"/><rect x="860" y="541" width="17" height="1" fill="#07073c"/><rect x="860" y="541" width="2" height="1" fill="#000"/><rect x="860" y="542" width="11" height="1" fill="#000"/><rect x="860" y="543" width="11" height="1" fill="#000"/><rect x="860" y="544" width="13" height="1" fill="#000"/><rect x="860" y="545" width="14" height="1" fill="#000"/><rect x="860" y="546" width="4" height="1" fill="#000"/><rect x="860" y="547" width="9" height="1" fill="#000"/><rect x="860" y="548" width="5" height="1" fill="#000"/><rect x="860" y="549" width="21" height="1" fill="#07073c"/><rect x="860" y="549" width="5" height="1" fill="#000"/><rect x="860" y="550" width="23" height="1" fill="#07073c"/><rect x="860" y="550" width="5" height="1" fill="#000"/><rect x="860" y="551" width="24" height="1" fill="#07073c"/><rect x="860" y="551" width="8" height="1" fill="#000"/><rect x="860" y="552" width="19" height="1" fill="#07073c"/><rect x="860" y="552" width="6" height="1" fill="#000"/><rect x="860" y="553" width="4" height="1" fill="#000"/><rect x="860" y="554" width="11" height="1" fill="#000"/><rect x="860" y="555" width="10" height="1" fill="#000"/><rect x="860" y="556" width="12" height="1" fill="#000"/><rect x="860" y="557" width="18" height="1" fill="#000"/><rect x="860" y="558" width="22" height="1" fill="#000"/><rect x="860" y="559" width="22" height="1" fill="#07073c"/><rect x="860" y="559" width="12" height="1" fill="#000"/><rect x="860" y="560" width="21" height="1" fill="#07073c"/><rect x="860" y="560" width="13" height="1" fill="#000"/><rect x="860" y="561" width="18" height="1" fill="#07073c"/><rect x="860" y="561" width="12" height="1" fill="#000"/><rect x="860" y="562" width="17" height="1" fill="#07073c"/><rect x="860" y="562" width="11" height="1" fill="#000"/><rect x="860" y="563" width="17" height="1" fill="#07073c"/><rect x="860" y="563" width="7" height="1" fill="#000"/><rect x="860" y="564" width="16" height="1" fill="#07073c"/><rect x="860" y="564" width="7" height="1" fill="#000"/><rect x="860" y="565" width="7" height="1" fill="#000"/><rect x="860" y="566" width="11" height="1" fill="#000"/><rect x="860" y="567" width="11" height="1" fill="#000"/><rect x="860" y="568" width="11" height="1" fill="#000"/><rect x="860" y="569" width="8" height="1" fill="#000"/><rect x="860" y="570" width="8" height="1" fill="#000"/><rect x="860" y="571" width="9" height="1" fill="#000"/><rect x="860" y="572" width="4" height="1" fill="#000"/><rect x="860" y="574" width="1" height="1" fill="#000"/><rect x="860" y="575" width="8" height="1" fill="#000"/><rect x="860" y="576" width="5" height="1" fill="#000"/><rect x="860" y="577" width="11" height="1" fill="#000"/><rect x="860" y="578" width="16" height="1" fill="#000"/><rect x="860" y="579" width="18" height="1" fill="#000"/><rect x="860" y="580" width="14" height="1" fill="#000"/><rect x="860" y="581" width="10" height="1" fill="#000"/><rect x="860" y="582" width="10" height="1" fill="#000"/><rect x="860" y="583" width="12" height="1" fill="#000"/><rect x="860" y="584" width="9" height="1" fill="#000"/><rect x="860" y="585" width="9" height="1" fill="#000"/><rect x="860" y="586" width="16" height="1" fill="#000"/><rect x="860" y="587" width="8" height="1" fill="#000"/><rect x="860" y="588" width="22" height="1" fill="#07073c"/><rect x="860" y="588" width="9" height="1" fill="#000"/><rect x="860" y="589" width="20" height="1" fill="#07073c"/><rect x="860" y="589" width="9" height="1" fill="#000"/><rect x="860" y="590" width="20" height="1" fill="#07073c"/><rect x="860" y="590" width="8" height="1" fill="#000"/><rect x="860" y="591" width="22" height="1" fill="#07073c"/><rect x="860" y="591" width="7" height="1" fill="#000"/><rect x="860" y="592" width="19" height="1" fill="#000"/><rect x="860" y="593" width="22" height="1" fill="#000"/><rect x="860" y="594" width="16" height="1" fill="#000"/><rect x="860" y="595" width="13" height="1" fill="#000"/><rect x="860" y="596" width="18" height="1" fill="#000"/><rect x="860" y="597" width="13" height="1" fill="#000"/><rect x="860" y="598" width="9" height="1" fill="#000"/><rect x="860" y="599" width="8" height="1" fill="#000"/><rect x="860" y="600" width="9" height="1" fill="#000"/><rect x="860" y="601" width="8" height="1" fill="#000"/><rect x="860" y="602" width="13" height="1" fill="#000"/><rect x="860" y="603" width="8" height="1" fill="#000"/><rect x="860" y="604" width="14" height="1" fill="#000"/><rect x="860" y="605" width="11" height="1" fill="#000"/><rect x="860" y="606" width="19" height="1" fill="#000"/><rect x="860" y="607" width="17" height="1" fill="#000"/><rect x="860" y="608" width="18" height="1" fill="#000"/><rect x="860" y="609" width="16" height="1" fill="#000"/><rect x="860" y="610" width="16" height="1" fill="#000"/><rect x="860" y="611" width="10" height="1" fill="#000"/><rect x="860" y="612" width="5" height="1" fill="#000"/><rect x="860" y="613" width="2" height="1" fill="#000"/><rect x="860" y="614" width="1" height="1" fill="#000"/><rect x="860" y="615" width="6" height="1" fill="#000"/><rect x="860" y="616" width="1" height="1" fill="#000"/><rect x="860" y="617" width="3" height="1" fill="#000"/><rect x="860" y="618" width="13" height="1" fill="#000"/><rect x="860" y="619" width="6" height="1" fill="#000"/><rect x="860" y="620" width="6" height="1" fill="#000"/><rect x="860" y="621" width="7" height="1" fill="#000"/><rect x="860" y="622" width="17" height="1" fill="#07073c"/><rect x="860" y="622" width="5" height="1" fill="#000"/><rect x="860" y="623" width="18" height="1" fill="#07073c"/><rect x="860" y="623" width="3" height="1" fill="#000"/><rect x="860" y="624" width="16" height="1" fill="#07073c"/><rect x="860" y="624" width="4" height="1" fill="#000"/><rect x="860" y="630" width="6" height="1" fill="#000"/><rect x="860" y="631" width="6" height="1" fill="#000"/><rect x="860" y="632" width="2" height="1" fill="#000"/><rect x="860" y="633" width="7" height="1" fill="#000"/><rect x="860" y="634" width="7" height="1" fill="#000"/><rect x="860" y="635" width="9" height="1" fill="#000"/><rect x="860" y="636" width="14" height="1" fill="#000"/><rect x="860" y="637" width="15" height="1" fill="#000"/><rect x="860" y="638" width="18" height="1" fill="#07073c"/><rect x="860" y="638" width="6" height="1" fill="#000"/><rect x="860" y="639" width="19" height="1" fill="#07073c"/><rect x="860" y="639" width="9" height="1" fill="#000"/><rect x="860" y="640" width="19" height="1" fill="#07073c"/><rect x="860" y="640" width="8" height="1" fill="#000"/><rect x="860" y="641" width="16" height="1" fill="#07073c"/><rect x="860" y="641" width="6" height="1" fill="#000"/><rect x="860" y="642" width="11" height="1" fill="#000"/><rect x="860" y="643" width="16" height="1" fill="#000"/><rect x="860" y="644" width="13" height="1" fill="#000"/><rect x="860" y="645" width="17" height="1" fill="#000"/><rect x="860" y="646" width="18" height="1" fill="#000"/><rect x="860" y="647" width="12" height="1" fill="#000"/><rect x="860" y="648" width="14" height="1" fill="#000"/><rect x="860" y="649" width="14" height="1" fill="#000"/><rect x="860" y="650" width="17" height="1" fill="#000"/><rect x="860" y="651" width="13" height="1" fill="#000"/><rect x="860" y="652" width="9" height="1" fill="#000"/><rect x="860" y="653" width="5" height="1" fill="#000"/><rect x="860" y="654" width="4" height="1" fill="#000"/><rect x="860" y="655" width="3" height="1" fill="#000"/><rect x="860" y="656" width="3" height="1" fill="#000"/><rect x="860" y="659" width="18" height="1" fill="#07073c"/><rect x="860" y="659" width="0" height="1" fill="#000"/><rect x="860" y="660" width="18" height="1" fill="#07073c"/><rect x="860" y="660" width="0" height="1" fill="#000"/><rect x="860" y="661" width="17" height="1" fill="#07073c"/><rect x="860" y="661" width="0" height="1" fill="#000"/><rect x="860" y="666" width="2" height="1" fill="#000"/><rect x="860" y="667" width="4" height="1" fill="#000"/><rect x="860" y="668" width="1" height="1" fill="#000"/><rect x="860" y="669" width="5" height="1" fill="#000"/><rect x="860" y="670" width="6" height="1" fill="#000"/><rect x="860" y="671" width="7" height="1" fill="#000"/><rect x="860" y="672" width="1" height="1" fill="#000"/><rect x="860" y="673" width="19" height="1" fill="#07073c"/><rect x="860" y="673" width="1" height="1" fill="#000"/><rect x="860" y="674" width="19" height="1" fill="#07073c"/><rect x="860" y="674" width="1" height="1" fill="#000"/><rect x="860" y="675" width="23" height="1" fill="#07073c"/><rect x="860" y="675" width="4" height="1" fill="#000"/><rect x="860" y="676" width="4" height="1" fill="#000"/><rect x="860" y="677" width="7" height="1" fill="#000"/><rect x="860" y="678" width="7" height="1" fill="#000"/><rect x="860" y="679" width="7" height="1" fill="#000"/><rect x="860" y="681" width="5" height="1" fill="#000"/><rect x="860" y="682" width="2" height="1" fill="#000"/><rect x="860" y="683" width="2" height="1" fill="#000"/><rect x="860" y="684" width="21" height="1" fill="#07073c"/><rect x="860" y="684" width="8" height="1" fill="#000"/><rect x="860" y="685" width="6" height="1" fill="#000"/><rect x="860" y="686" width="10" height="1" fill="#000"/><rect x="860" y="687" width="3" height="1" fill="#000"/><rect x="860" y="688" width="10" height="1" fill="#000"/><rect x="860" y="689" width="10" height="1" fill="#000"/><rect x="860" y="690" width="12" height="1" fill="#000"/><rect x="860" y="691" width="6" height="1" fill="#000"/><rect x="860" y="692" width="6" height="1" fill="#000"/><rect x="860" y="693" width="10" height="1" fill="#000"/><rect x="860" y="694" width="6" height="1" fill="#000"/><rect x="860" y="695" width="20" height="1" fill="#000"/><rect x="860" y="696" width="19" height="1" fill="#000"/><rect x="860" y="697" width="12" height="1" fill="#000"/><rect x="860" y="698" width="19" height="1" fill="#000"/><rect x="860" y="699" width="9" height="1" fill="#000"/><rect x="860" y="700" width="15" height="1" fill="#000"/><rect x="860" y="701" width="11" height="1" fill="#000"/><rect x="860" y="702" width="8" height="1" fill="#000"/><rect x="860" y="703" width="11" height="1" fill="#000"/><rect x="860" y="704" width="13" height="1" fill="#000"/><rect x="860" y="705" width="16" height="1" fill="#000"/><rect x="860" y="706" width="18" height="1" fill="#000"/><rect x="860" y="707" width="7" height="1" fill="#000"/><rect x="860" y="708" width="13" height="1" fill="#000"/><rect x="860" y="709" width="17" height="1" fill="#000"/><rect x="860" y="710" width="13" height="1" fill="#000"/><rect x="860" y="711" width="12" height="1" fill="#000"/><rect x="860" y="712" width="11" height="1" fill="#000"/><rect x="860" y="713" width="9" height="1" fill="#000"/><rect x="860" y="714" width="14" height="1" fill="#000"/><rect x="860" y="715" width="9" height="1" fill="#000"/><rect x="860" y="716" width="15" height="1" fill="#07073c"/><rect x="860" y="716" width="3" height="1" fill="#000"/><rect x="860" y="717" width="17" height="1" fill="#07073c"/><rect x="860" y="717" width="2" height="1" fill="#000"/><rect x="860" y="718" width="14" height="1" fill="#07073c"/><rect x="860" y="718" width="6" height="1" fill="#000"/><rect x="860" y="719" width="8" height="1" fill="#000"/><rect x="860" y="720" width="10" height="1" fill="#000"/><rect x="860" y="721" width="6" height="1" fill="#000"/><rect x="860" y="722" width="8" height="1" fill="#000"/><rect x="860" y="723" width="13" height="1" fill="#000"/><rect x="860" y="724" width="6" height="1" fill="#000"/><rect x="860" y="725" width="16" height="1" fill="#07073c"/><rect x="860" y="725" width="6" height="1" fill="#000"/><rect x="860" y="726" width="12" height="1" fill="#07073c"/><rect x="860" y="726" width="2" height="1" fill="#000"/><rect x="860" y="727" width="13" height="1" fill="#07073c"/><rect x="860" y="727" width="4" height="1" fill="#000"/><rect x="860" y="728" width="12" height="1" fill="#07073c"/><rect x="860" y="728" width="4" height="1" fill="#000"/><rect x="860" y="729" width="16" height="1" fill="#07073c"/><rect x="860" y="729" width="7" height="1" fill="#000"/><rect x="860" y="730" width="16" height="1" fill="#07073c"/><rect x="860" y="730" width="11" height="1" fill="#000"/><rect x="860" y="731" width="17" height="1" fill="#000"/><rect x="860" y="732" width="13" height="1" fill="#000"/><rect x="860" y="733" width="17" height="1" fill="#07073c"/><rect x="860" y="733" width="8" height="1" fill="#000"/><rect x="860" y="734" width="17" height="1" fill="#07073c"/><rect x="860" y="734" width="7" height="1" fill="#000"/><rect x="860" y="735" width="15" height="1" fill="#07073c"/><rect x="860" y="735" width="10" height="1" fill="#000"/><rect x="860" y="736" width="6" height="1" fill="#000"/><rect x="860" y="737" width="21" height="1" fill="#000"/><rect x="860" y="738" width="17" height="1" fill="#000"/><rect x="860" y="739" width="16" height="1" fill="#000"/><rect x="860" y="740" width="18" height="1" fill="#000"/><rect x="860" y="741" width="26" height="1" fill="#07073c"/><rect x="860" y="741" width="3" height="1" fill="#000"/><rect x="860" y="742" width="24" height="1" fill="#07073c"/><rect x="860" y="742" width="8" height="1" fill="#000"/><rect x="860" y="743" width="11" height="1" fill="#000"/><rect x="860" y="744" width="15" height="1" fill="#000"/><rect x="860" y="745" width="17" height="1" fill="#000"/><rect x="860" y="746" width="14" height="1" fill="#000"/><rect x="860" y="747" width="22" height="1" fill="#07073c"/><rect x="860" y="747" width="6" height="1" fill="#000"/><rect x="860" y="748" width="20" height="1" fill="#07073c"/><rect x="860" y="748" width="8" height="1" fill="#000"/><rect x="860" y="749" width="22" height="1" fill="#07073c"/><rect x="860" y="749" width="5" height="1" fill="#000"/><rect x="860" y="750" width="9" height="1" fill="#000"/><rect x="860" y="751" width="9" height="1" fill="#000"/><rect x="860" y="752" width="7" height="1" fill="#000"/><rect x="860" y="753" width="10" height="1" fill="#000"/><rect x="860" y="754" width="10" height="1" fill="#000"/><rect x="860" y="755" width="11" height="1" fill="#000"/><rect x="860" y="756" width="10" height="1" fill="#000"/><rect x="860" y="757" width="2" height="1" fill="#000"/><rect x="860" y="759" width="7" height="1" fill="#000"/><rect x="860" y="760" width="1" height="1" fill="#000"/><rect x="860" y="761" width="3" height="1" fill="#000"/><rect x="860" y="762" width="21" height="1" fill="#07073c"/><rect x="860" y="762" width="2" height="1" fill="#000"/><rect x="860" y="763" width="21" height="1" fill="#07073c"/><rect x="860" y="763" width="3" height="1" fill="#000"/><rect x="860" y="764" width="8" height="1" fill="#000"/><rect x="860" y="765" width="6" height="1" fill="#000"/><rect x="860" y="766" width="15" height="1" fill="#000"/><rect x="860" y="767" width="8" height="1" fill="#000"/><rect x="860" y="768" width="9" height="1" fill="#000"/><rect x="860" y="769" width="12" height="1" fill="#000"/><rect x="860" y="770" width="15" height="1" fill="#000"/><rect x="860" y="771" width="10" height="1" fill="#000"/><rect x="860" y="772" width="5" height="1" fill="#000"/><rect x="860" y="773" width="4" height="1" fill="#000"/><rect x="860" y="212" width="36" height="2" fill="#3c0c70"/><rect x="860" y="211" width="24" height="1" fill="#0a0a40"/><rect x="860" y="214" width="26" height="1" fill="#0a0a40"/></g><g fill="#a0a0a0"><rect x="860" y="28" width="80" height="1"/><rect x="860" y="106" width="80" height="1"/><rect x="860" y="184" width="80" height="1"/><rect x="860" y="262" width="80" height="1"/><rect x="860" y="340" width="80" height="1"/><rect x="860" y="418" width="80" height="1"/><rect x="860" y="496" width="80" height="1"/><rect x="860" y="574" width="80" height="1"/><rect x="860" y="652" width="80" height="1"/><rect x="860" y="730" width="80" height="1"/></g><polyline points="861.0,2.0 860.2,4.2 861.9,6.3 860.7,8.5 862.1,10.7 860.5,12.8 860.3,15.0 861.7,17.5 864.4,20.0 864.8,22.0 869.0,24.0 868.7,26.5 870.9,29.0 870.2,31.2 870.2,33.5 872.7,35.8 870.8,38.0 872.8,40.0 870.1,42.0 870.6,44.0 871.2,46.0 871.0,48.0 869.4,50.0 870.7,52.1 869.1,54.2 871.2,56.3 868.8,58.4 868.7,60.6 870.4,62.7 871.3,64.8 870.9,66.9 869.5,69.0 869.5,71.2 871.1,73.4 872.5,75.6 870.5,77.8 872.4,80.0 870.6,82.0 871.0,84.0 871.3,86.0 870.1,88.0 869.1,90.0 871.3,92.0 870.0,94.0 871.0,96.0 870.3,98.0 871.8,100.0 870.5,102.0 873.3,104.0 872.7,106.0 871.2,108.0 872.9,110.0 871.1,112.0 871.2,114.0 873.0,116.0 871.4,118.0 871.2,120.0 872.2,122.0 871.0,124.0 872.7,126.0 871.5,128.0 872.5,130.0 871.1,132.0 872.7,134.0 871.3,136.0 872.9,138.0 870.8,140.0 872.1,142.0 870.9,144.0 872.3,146.0 870.8,148.0 871.7,150.0 870.3,152.0 871.8,154.0 871.8,156.0 870.5,158.0 871.6,160.0 870.5,162.0 870.4,164.0 870.6,166.0 872.0,168.0 871.7,170.0 870.9,172.1 872.0,174.3 873.0,176.4 871.6,178.6 871.5,180.7 872.1,182.9 873.6,185.0 873.1,187.0 874.9,189.0 874.1,191.0 875.0,193.0 877.2,195.0 878.5,197.0 877.3,199.0 879.3,201.0 882.1,203.0 884.2,205.3 889.6,207.7 892.7,210.0 900.6,213.0 900.3,215.3 901.0,217.7 901.2,220.0 897.5,222.0 892.3,224.0 890.6,226.0 883.2,228.0 879.2,230.0 874.9,232.5 874.2,235.0 870.9,237.5 871.5,240.0 869.9,242.0 872.1,244.0 872.1,246.0 871.3,248.0 869.8,250.0 871.5,252.0 870.2,254.0 871.8,256.0 870.7,258.0 871.4,260.0 870.7,262.0 869.9,264.0 871.8,266.0 870.4,268.0 871.9,270.0 870.4,272.0 871.6,274.0 870.2,276.0 871.7,278.0 870.6,280.0 871.9,282.0 870.3,284.0 870.1,286.0 871.6,288.0 870.0,290.0 872.0,292.0 870.5,294.0 872.0,296.0 870.3,298.0 872.2,300.0 871.6,302.0 872.1,304.0 870.3,306.0 872.1,308.0 869.8,310.0 872.0,312.0 870.2,314.0 871.9,316.0 870.6,318.0 871.3,320.0 870.6,322.0 870.6,324.0 872.1,326.0 869.9,328.0 872.1,330.0 871.9,332.0 870.7,334.0 871.8,336.0 870.6,338.0 872.2,340.0 870.4,342.0 872.1,344.0 870.6,346.0 871.9,348.0 870.3,350.0 871.7,352.0 870.3,354.0 871.8,356.0 871.7,358.0 870.6,360.0 872.0,362.0 870.2,364.0 871.9,366.0 871.4,368.0 870.0,370.0 870.2,372.0 872.0,374.0 870.5,376.0 871.9,378.0 870.5,380.0 872.3,382.0 870.0,384.0 872.1,386.0 870.5,388.0 871.3,390.0 870.3,392.0 871.6,394.0 869.9,396.0 872.3,398.0 870.1,400.0 872.1,402.0 871.8,404.0 870.0,406.0 870.3,408.0 872.3,410.0 870.5,412.0 872.0,414.0 869.7,416.0 870.5,418.0 871.5,420.0 870.0,422.0 869.8,424.0 872.2,426.0 870.3,428.0 871.3,430.0 869.9,432.0 871.6,434.0 870.0,436.0 871.6,438.0 870.2,440.0 871.9,442.0 871.7,444.0 870.6,446.0 872.0,448.0 869.8,450.0 870.6,452.0 870.4,454.0 872.0,456.0 870.0,458.0 872.1,460.0 870.0,462.0 870.0,464.0 871.4,466.0 870.4,468.0 872.0,470.0 870.6,472.0 871.9,474.0 869.8,476.0 871.4,478.0 871.4,480.0 870.0,482.0 871.8,484.0 870.3,486.0 871.4,488.0 870.0,490.0 871.8,492.0 870.4,494.0 871.7,496.0 871.3,498.0 870.5,500.0 871.6,502.0 870.3,504.0 872.1,506.0 869.9,508.0 871.5,510.0 870.6,512.0 872.0,514.0 870.5,516.0 872.0,518.0 872.0,520.0 870.6,522.0 871.5,524.0 870.1,526.0 871.5,528.0 870.7,530.0 869.8,532.0 870.3,534.0 871.9,536.0 869.7,538.0 871.6,540.0 871.8,542.0 870.0,544.0 872.1,546.0 870.2,548.0 871.7,550.0 870.2,552.0 871.8,554.0 870.3,556.0 872.3,558.0 871.4,560.0 870.1,562.0 871.6,564.0 870.7,566.0 872.2,568.0 869.8,570.0 871.4,572.0 871.9,574.0 872.0,576.0 870.4,578.0 869.8,580.0 870.3,582.0 871.8,584.0 870.7,586.0 871.5,588.0 870.2,590.0 871.8,592.0 870.1,594.0 871.7,596.0 870.3,598.0 872.2,600.0 870.4,602.0 871.8,604.0 870.5,606.0 871.5,608.0 870.6,610.0 871.5,612.0 870.6,614.0 871.4,616.0 870.6,618.0 871.8,620.0 870.7,622.0 871.7,624.0 870.7,626.0 871.7,628.0 869.7,630.0 871.4,632.0 870.6,634.0 871.6,636.0 870.7,638.0 871.5,640.0 870.3,642.0 870.4,644.0 871.5,646.0 871.9,648.0 870.6,650.0 872.3,652.0 870.7,654.0 871.4,656.0 870.7,658.0 871.9,660.0 871.5,662.0 871.8,664.0 872.2,666.0 871.3,668.0 870.1,670.0 870.6,672.0 872.1,674.0 870.3,676.0 872.0,678.0 871.4,680.0 870.0,682.0 870.2,684.0 870.4,686.0 871.5,688.0 870.2,690.0 871.4,692.0 870.1,694.0 871.7,696.0 870.6,698.0 871.3,700.0 870.0,702.0 871.4,704.0 869.9,706.0 872.2,708.0 871.7,710.0 872.0,712.0 870.4,714.0 871.7,716.0 871.4,718.0 870.6,720.0 871.9,722.0 870.7,724.0 871.9,726.0 870.7,728.0 872.3,730.0 870.2,732.0 872.1,734.0 869.9,736.0 871.5,738.0 870.7,740.0 870.6,742.0 872.3,744.0 869.8,746.0 871.7,748.0 869.9,750.0 871.9,752.0 869.8,754.0 871.9,756.0 870.6,758.0 870.1,760.0 869.3,762.0 869.2,764.0 866.9,766.0 866.8,768.0 863.8,770.3 864.0,772.7 861.1,775.0 862.0,777.0 861.3,779.0 860.0,781.0" fill="none" stroke="#c43838" stroke-width="1.3"/><polyline points="861.0,6.0 865.1,7.5 871.0,9.0 877.0,11.5 885.6,15.0 883.4,19.0 891.3,23.0 891.1,26.0 892.7,29.0 888.3,31.4 892.0,34.3 892.9,37.1 895.9,40.0 893.0,43.0 892.0,46.0 892.4,48.6 893.6,51.1 897.5,53.7 897.1,56.1 900.5,58.6 899.9,61.0 898.9,63.2 898.2,65.4 895.9,67.6 895.4,69.8 892.2,72.0 901.5,75.0 900.5,77.5 898.1,80.0 900.4,82.3 901.8,84.7 902.0,87.0 901.4,90.3 897.3,93.6 899.8,95.8 899.9,98.0 903.2,100.7 904.7,103.3 904.5,106.0 900.4,110.0 900.5,112.2 904.2,114.5 904.1,116.8 907.5,119.0 902.0,120.0 904.4,122.5 903.2,125.0 904.4,127.5 904.0,130.0 905.8,132.5 904.7,135.0 904.8,137.5 906.4,140.0 905.6,142.5 907.6,145.0 906.5,147.5 908.7,150.0 909.6,152.5 909.4,155.0 912.7,157.5 912.4,160.0 914.6,162.4 913.6,164.8 913.8,167.2 914.8,169.6 916.9,172.0 916.1,174.6 917.5,177.2 916.7,179.8 917.6,182.4 919.5,185.0 920.5,187.5 924.0,190.0 924.1,192.5 927.8,195.0 927.8,197.7 931.2,200.3 931.4,203.0 937.8,206.0 942.0,209.0" fill="none" stroke="#3cd83c" stroke-width="1.0"/><polyline points="942.0,228.0 918.4,230.0 914.2,232.0 911.1,234.0 916.1,236.0 911.6,238.0 916.2,240.3 911.7,242.7 915.2,245.0 910.3,247.0 910.2,249.0 908.4,251.0 908.4,253.0 911.5,255.0 910.3,257.3 907.3,259.7 909.3,262.0 909.5,264.2 904.8,266.3 909.3,268.5 907.8,270.7 903.2,272.8 902.1,275.0 904.0,277.5 898.7,280.0 900.7,282.1 901.6,284.3 897.4,286.4 900.5,288.6 898.4,290.7 901.8,292.9 898.4,295.0 899.5,297.1 895.9,299.3 899.9,301.4 896.9,303.6 901.3,305.7 896.5,307.9 899.6,310.0 898.8,312.0 899.9,314.0 894.1,316.0 899.0,318.0 894.2,320.0 897.7,322.0 894.0,324.0 895.4,326.0 891.1,328.0 893.7,330.0 892.0,332.5 896.2,335.0 891.7,337.5 895.6,340.0 893.1,342.5 886.3,345.0 889.9,347.5 888.7,350.0 885.6,352.5 886.9,355.0 885.9,357.0 883.4,359.0 887.0,361.0 882.8,363.0 886.6,365.0 885.3,367.0 888.5,369.0 883.7,371.0 888.9,373.1 886.7,375.1 883.1,377.1 887.6,379.1 883.4,381.1 887.7,383.1 884.5,385.1 888.1,387.2 885.1,389.2 886.8,391.2 883.9,393.2 888.8,395.2 883.7,397.2 888.6,399.3 883.9,401.3 883.2,403.3 884.3,405.3 888.5,407.3 883.1,409.3 884.3,411.3 887.7,413.4 883.7,415.4 888.5,417.4 887.3,419.4 886.8,421.4 887.3,423.4 887.6,425.4 886.7,427.5 883.4,429.5 887.9,431.5 885.0,433.5 886.7,435.5 888.4,437.5 888.3,439.6 885.2,441.6 886.9,443.6 884.3,445.6 886.8,447.6 884.2,449.6 887.9,451.6 884.7,453.7 888.0,455.7 884.9,457.7 888.0,459.7 887.6,461.7 884.6,463.7 888.0,465.7 884.0,467.8 887.4,469.8 884.3,471.8 889.0,473.8 883.8,475.8 888.1,477.8 887.5,479.9 883.1,481.9 888.1,483.9 885.3,485.9 888.4,487.9 883.7,489.9 887.5,491.9 884.1,494.0 887.1,496.0 883.2,498.0 887.7,500.0 883.3,502.0 888.2,504.0 885.1,506.0 885.3,508.0 883.6,510.0 888.4,512.0 884.7,514.0 887.1,516.0 888.5,518.0 884.9,520.0 887.2,522.0 883.6,524.0 883.7,526.0 888.5,528.0 884.0,530.0 887.5,532.0 883.1,534.0 888.8,536.0 887.6,538.0 886.7,540.0 885.4,542.0 886.6,544.0 886.8,546.0 884.7,548.0 887.6,550.0 883.1,552.0 888.0,554.0 883.9,556.0 887.2,558.0 883.3,560.0 887.7,562.0 888.0,564.0 888.5,566.0 885.1,568.0 887.7,570.0 887.9,572.0 883.5,574.0 888.6,576.0 887.0,578.0 888.7,580.0 887.4,582.0 885.1,584.0 888.7,586.0 885.4,588.0 886.8,590.0 883.6,592.0 885.2,594.0 886.9,596.0 888.6,598.0 883.1,600.0 888.5,602.0 884.5,604.0 883.4,606.0 888.7,608.0 883.5,610.0 886.9,612.0 884.0,614.0 887.0,616.0 885.1,618.0 888.5,620.0 883.0,622.0 886.9,624.0 885.0,626.0 888.8,628.0 885.0,630.0 888.7,632.0 884.3,634.0 888.1,636.0 883.5,638.0 888.4,640.0 888.1,642.0 887.3,644.0 883.3,646.0 889.0,648.0 885.3,650.0 888.3,652.0 883.9,654.0 888.6,656.0 883.4,658.0 888.2,660.0 884.4,662.0 887.9,664.0 886.8,666.0 885.4,668.0 883.1,670.0 887.8,672.0 885.1,674.0 888.5,676.0 888.7,678.0 884.8,680.0 887.4,682.0 883.3,684.0 889.0,686.0 885.3,688.0 888.2,690.0 885.4,692.0 884.2,694.0 887.0,696.0 885.4,698.0 887.3,700.0 885.3,702.0 888.3,704.0 887.1,706.0 884.0,708.0 888.7,710.0 885.0,712.0 888.8,714.0 884.5,716.0 887.5,718.0 885.2,720.0 888.0,722.0 883.9,724.0 888.1,726.0 887.8,728.0 883.4,730.0 887.2,732.0 887.3,734.0 884.5,736.0 884.1,738.0 885.0,740.0 887.8,742.0 883.0,744.0 885.6,746.0 882.7,748.0 885.0,750.0 883.9,752.0 886.3,754.0 883.5,756.0 883.7,758.0 885.8,760.0 880.7,762.0 880.2,764.0 880.4,766.0 875.3,768.0 877.5,770.5 869.3,773.0 868.6,775.0 867.9,777.0 862.9,779.0 862.0,781.0" fill="none" stroke="#3cd83c" stroke-width="1.0"/><path d="M936,782 Q937,776 941,775" fill="none" stroke="#3cd83c" stroke-width="1.0"/><circle cx="940" cy="65.7" r="3.3" fill="#000" stroke="#b83030" stroke-width="1.3"/><rect x="940" y="0" width="1" height="783" fill="#fff"/></svg>
</body></html>
